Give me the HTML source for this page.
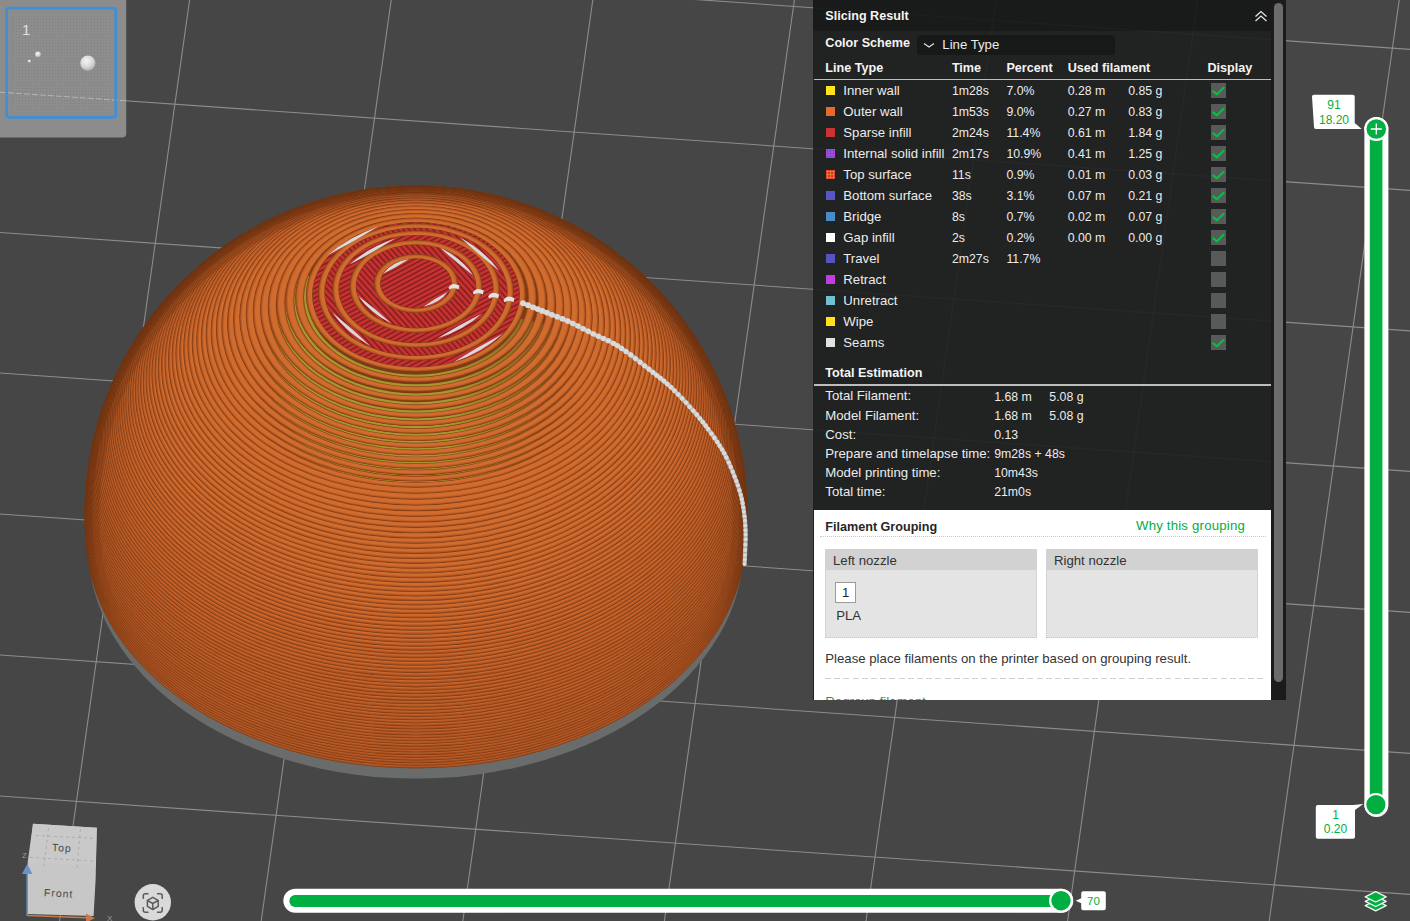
<!DOCTYPE html>
<html><head><meta charset="utf-8"><style>
html,body{margin:0;padding:0;width:1410px;height:921px;overflow:hidden;background:#454645;}
#vp{position:absolute;left:0;top:0;}

#pn{position:absolute;left:813px;top:0;width:458px;height:700px;overflow:hidden;font-family:"Liberation Sans",sans-serif;}
#pn span{position:absolute;white-space:nowrap;color:#ececec;}
#pn .t{font-size:13.2px;line-height:13.2px;}
#pn .n{font-size:12.3px;line-height:12.3px;}
#pn .b{font-size:12.6px;line-height:12.6px;font-weight:bold;color:#f4f4f4;}
#hd{position:absolute;left:0;top:0;width:458px;height:30.6px;background:rgba(22,23,23,0.93);}
#bd{position:absolute;left:0;top:30.6px;width:458px;height:479px;background:rgba(30,32,31,0.92);}
#wh{position:absolute;left:0;top:509.5px;width:458px;height:191px;background:#fff;box-sizing:border-box;border-left:1px solid #202020;border-bottom:1px solid #202020;}
#dd{position:absolute;left:104px;top:35.3px;width:198px;height:20px;background:#171818;border-radius:3px;}
.hl{position:absolute;left:1px;width:457px;height:1.3px;background:#bdbdbd;}
.sw{position:absolute;width:9px;height:9px;}
.cb{position:absolute;left:398px;width:15px;height:15px;background:#585959;}
.ck{position:absolute;left:398px;}
.dl{position:absolute;height:0;}
.nz{position:absolute;top:549.4px;width:212px;height:89px;background:#e4e4e4;box-sizing:border-box;border:1px dotted #c4c4c4;}
.nzh{position:absolute;left:-1px;top:-1px;width:212px;height:20.4px;background:#d2d2d2;}
#fb{position:absolute;left:21.9px;top:581.7px;width:19.5px;height:19.8px;background:#fff;border:1.1px solid #9a9a9a;font-size:13px;line-height:20px;text-align:center;color:#222;}
#sc{position:absolute;left:1271px;top:0;width:15px;height:700px;background:#1b1b1b;}
#th{position:absolute;left:3px;top:3px;width:9px;height:679px;background:#6b6b6b;border-radius:4.5px;}

</style></head><body>
<svg id="vp" width="1410" height="921" viewBox="0 0 1410 921">
<g stroke="#8b8c8b" stroke-width="1.1" fill="none"><line x1="0" y1="-49" x2="1410" y2="49.4"/><line x1="0" y1="92" x2="1410" y2="190.4"/><line x1="0" y1="232.5" x2="1410" y2="330.9"/><line x1="0" y1="373" x2="1410" y2="471.4"/><line x1="0" y1="514" x2="1410" y2="612.4"/><line x1="0" y1="655" x2="1410" y2="753.4"/><line x1="0" y1="796" x2="1410" y2="894.4"/><line x1="-12.0" y1="0" x2="-142.0" y2="921"/><line x1="189.6" y1="0" x2="59.6" y2="921"/><line x1="391.2" y1="0" x2="261.2" y2="921"/><line x1="592.8" y1="0" x2="462.8" y2="921"/><line x1="794.4" y1="0" x2="664.4" y2="921"/><line x1="996.0" y1="0" x2="866.0" y2="921"/><line x1="1197.6" y1="0" x2="1067.6" y2="921"/><line x1="1399.2" y1="0" x2="1269.2" y2="921"/></g>
<defs>
<pattern id="hatch1" patternUnits="userSpaceOnUse" width="4.2" height="4.2" patternTransform="rotate(-28)"><rect width="4.2" height="4.2" fill="#c63232"/><rect y="2.5" width="4.2" height="1.7" fill="#8e1f1f"/></pattern>
<pattern id="hatch0" patternUnits="userSpaceOnUse" width="4.4" height="4.4" patternTransform="rotate(48)"><rect width="4.4" height="4.4" fill="#c63232"/><rect y="2.6" width="4.4" height="1.8" fill="#8e1f1f"/></pattern>
</defs><ellipse cx="416.0" cy="547.75" rx="327.56" ry="230.83" fill="#6a6c6c"/>
<linearGradient id="yfade" gradientUnits="userSpaceOnUse" x1="450" y1="0" x2="600" y2="0"><stop offset="0" stop-color="#fff"/><stop offset="1" stop-color="#fff" stop-opacity="0"/></linearGradient>
<mask id="ymask"><path d="M0,262 L240,262 L600,335 L900,380 L900,900 L0,900Z" fill="url(#yfade)"/></mask>
<ellipse cx="416.0" cy="537.55" rx="329.76" ry="230.83" fill="#7e3c16"/>
<ellipse cx="416.0" cy="537.55" rx="329.26" ry="230.28" fill="#9a4a1d"/>
<ellipse cx="416.0" cy="537.55" rx="328.66" ry="229.53" fill="#b35726"/>
<ellipse cx="416.0" cy="537.55" rx="327.96" ry="228.63" fill="#c6632a"/>
<ellipse cx="416.0" cy="537.55" rx="327.16" ry="227.73" fill="#d06c2e"/>
<ellipse cx="416.0" cy="534.72" rx="330.15" ry="231.11" fill="#7e3c16"/>
<ellipse cx="416.0" cy="534.72" rx="329.65" ry="230.56" fill="#9a4a1d"/>
<ellipse cx="416.0" cy="534.72" rx="329.05" ry="229.81" fill="#b35726"/>
<ellipse cx="416.0" cy="534.72" rx="328.35" ry="228.91" fill="#c6632a"/>
<ellipse cx="416.0" cy="534.72" rx="327.55" ry="228.01" fill="#d06c2e"/>
<ellipse cx="416.0" cy="531.9" rx="330.49" ry="231.34" fill="#7e3c16"/>
<ellipse cx="416.0" cy="531.9" rx="329.99" ry="230.79" fill="#9a4a1d"/>
<ellipse cx="416.0" cy="531.9" rx="329.39" ry="230.04" fill="#b35726"/>
<ellipse cx="416.0" cy="531.9" rx="328.69" ry="229.14" fill="#c6632a"/>
<ellipse cx="416.0" cy="531.9" rx="327.89" ry="228.24" fill="#d06c2e"/>
<ellipse cx="416.0" cy="529.08" rx="330.78" ry="231.55" fill="#7e3c16"/>
<ellipse cx="416.0" cy="529.08" rx="330.28" ry="231" fill="#9a4a1d"/>
<ellipse cx="416.0" cy="529.08" rx="329.68" ry="230.25" fill="#b35726"/>
<ellipse cx="416.0" cy="529.08" rx="328.98" ry="229.35" fill="#c6632a"/>
<ellipse cx="416.0" cy="529.08" rx="328.18" ry="228.45" fill="#d06c2e"/>
<ellipse cx="416.0" cy="526.25" rx="331.02" ry="231.72" fill="#7e3c16"/>
<ellipse cx="416.0" cy="526.25" rx="330.52" ry="231.17" fill="#9a4a1d"/>
<ellipse cx="416.0" cy="526.25" rx="329.92" ry="230.42" fill="#b35726"/>
<ellipse cx="416.0" cy="526.25" rx="329.22" ry="229.52" fill="#c6632a"/>
<ellipse cx="416.0" cy="526.25" rx="328.42" ry="228.62" fill="#d06c2e"/>
<ellipse cx="416.0" cy="523.43" rx="331.21" ry="231.85" fill="#7e3c16"/>
<ellipse cx="416.0" cy="523.43" rx="330.71" ry="231.3" fill="#9a4a1d"/>
<ellipse cx="416.0" cy="523.43" rx="330.11" ry="230.55" fill="#b35726"/>
<ellipse cx="416.0" cy="523.43" rx="329.41" ry="229.65" fill="#c6632a"/>
<ellipse cx="416.0" cy="523.43" rx="328.61" ry="228.75" fill="#d06c2e"/>
<ellipse cx="416.0" cy="520.61" rx="331.36" ry="231.95" fill="#7e3c16"/>
<ellipse cx="416.0" cy="520.61" rx="330.86" ry="231.4" fill="#9a4a1d"/>
<ellipse cx="416.0" cy="520.61" rx="330.26" ry="230.65" fill="#b35726"/>
<ellipse cx="416.0" cy="520.61" rx="329.56" ry="229.75" fill="#c6632a"/>
<ellipse cx="416.0" cy="520.61" rx="328.76" ry="228.85" fill="#d06c2e"/>
<ellipse cx="416.0" cy="517.79" rx="331.45" ry="232.02" fill="#7e3c16"/>
<ellipse cx="416.0" cy="517.79" rx="330.95" ry="231.47" fill="#9a4a1d"/>
<ellipse cx="416.0" cy="517.79" rx="330.35" ry="230.72" fill="#b35726"/>
<ellipse cx="416.0" cy="517.79" rx="329.65" ry="229.82" fill="#c6632a"/>
<ellipse cx="416.0" cy="517.79" rx="328.85" ry="228.92" fill="#d06c2e"/>
<ellipse cx="416.0" cy="514.96" rx="331.5" ry="232.05" fill="#7e3c16"/>
<ellipse cx="416.0" cy="514.96" rx="331" ry="231.5" fill="#9a4a1d"/>
<ellipse cx="416.0" cy="514.96" rx="330.4" ry="230.75" fill="#b35726"/>
<ellipse cx="416.0" cy="514.96" rx="329.7" ry="229.85" fill="#c6632a"/>
<ellipse cx="416.0" cy="514.96" rx="328.9" ry="228.95" fill="#d06c2e"/>
<ellipse cx="416.0" cy="512.14" rx="331.49" ry="232.04" fill="#7e3c16"/>
<ellipse cx="416.0" cy="512.14" rx="330.99" ry="231.49" fill="#9a4a1d"/>
<ellipse cx="416.0" cy="512.14" rx="330.39" ry="230.74" fill="#b35726"/>
<ellipse cx="416.0" cy="512.14" rx="329.69" ry="229.84" fill="#c6632a"/>
<ellipse cx="416.0" cy="512.14" rx="328.89" ry="228.94" fill="#d06c2e"/>
<ellipse cx="416.0" cy="509.32" rx="331.44" ry="232.01" fill="#7e3c16"/>
<ellipse cx="416.0" cy="509.32" rx="330.94" ry="231.46" fill="#9a4a1d"/>
<ellipse cx="416.0" cy="509.32" rx="330.34" ry="230.71" fill="#b35726"/>
<ellipse cx="416.0" cy="509.32" rx="329.64" ry="229.81" fill="#c6632a"/>
<ellipse cx="416.0" cy="509.32" rx="328.84" ry="228.91" fill="#d06c2e"/>
<ellipse cx="416.0" cy="506.49" rx="331.34" ry="231.94" fill="#7e3c16"/>
<ellipse cx="416.0" cy="506.49" rx="330.84" ry="231.39" fill="#9a4a1d"/>
<ellipse cx="416.0" cy="506.49" rx="330.24" ry="230.64" fill="#b35726"/>
<ellipse cx="416.0" cy="506.49" rx="329.54" ry="229.74" fill="#c6632a"/>
<ellipse cx="416.0" cy="506.49" rx="328.74" ry="228.84" fill="#d06c2e"/>
<ellipse cx="416.0" cy="503.67" rx="331.18" ry="231.83" fill="#7e3c16"/>
<ellipse cx="416.0" cy="503.67" rx="330.68" ry="231.28" fill="#9a4a1d"/>
<ellipse cx="416.0" cy="503.67" rx="330.08" ry="230.53" fill="#b35726"/>
<ellipse cx="416.0" cy="503.67" rx="329.38" ry="229.63" fill="#c6632a"/>
<ellipse cx="416.0" cy="503.67" rx="328.58" ry="228.73" fill="#d06c2e"/>
<ellipse cx="416.0" cy="500.85" rx="330.98" ry="231.69" fill="#7e3c16"/>
<ellipse cx="416.0" cy="500.85" rx="330.48" ry="231.14" fill="#9a4a1d"/>
<ellipse cx="416.0" cy="500.85" rx="329.88" ry="230.39" fill="#b35726"/>
<ellipse cx="416.0" cy="500.85" rx="329.18" ry="229.49" fill="#c6632a"/>
<ellipse cx="416.0" cy="500.85" rx="328.38" ry="228.59" fill="#d06c2e"/>
<ellipse cx="416.0" cy="498.02" rx="330.73" ry="231.51" fill="#7e3c16"/>
<ellipse cx="416.0" cy="498.02" rx="330.23" ry="230.96" fill="#9a4a1d"/>
<ellipse cx="416.0" cy="498.02" rx="329.63" ry="230.21" fill="#b35726"/>
<ellipse cx="416.0" cy="498.02" rx="328.93" ry="229.31" fill="#c6632a"/>
<ellipse cx="416.0" cy="498.02" rx="328.13" ry="228.41" fill="#d06c2e"/>
<ellipse cx="416.0" cy="495.2" rx="330.44" ry="231.3" fill="#7e3c16"/>
<ellipse cx="416.0" cy="495.2" rx="329.94" ry="230.75" fill="#9a4a1d"/>
<ellipse cx="416.0" cy="495.2" rx="329.34" ry="230" fill="#b35726"/>
<ellipse cx="416.0" cy="495.2" rx="328.64" ry="229.1" fill="#c6632a"/>
<ellipse cx="416.0" cy="495.2" rx="327.84" ry="228.2" fill="#d06c2e"/>
<ellipse cx="416.0" cy="492.38" rx="330.09" ry="231.06" fill="#7e3c16"/>
<ellipse cx="416.0" cy="492.38" rx="329.59" ry="230.51" fill="#9a4a1d"/>
<ellipse cx="416.0" cy="492.38" rx="328.99" ry="229.76" fill="#b35726"/>
<ellipse cx="416.0" cy="492.38" rx="328.29" ry="228.86" fill="#c6632a"/>
<ellipse cx="416.0" cy="492.38" rx="327.49" ry="227.96" fill="#d06c2e"/>
<ellipse cx="416.0" cy="489.56" rx="329.69" ry="230.78" fill="#7e3c16"/>
<ellipse cx="416.0" cy="489.56" rx="329.19" ry="230.23" fill="#9a4a1d"/>
<ellipse cx="416.0" cy="489.56" rx="328.59" ry="229.48" fill="#b35726"/>
<ellipse cx="416.0" cy="489.56" rx="327.89" ry="228.58" fill="#c6632a"/>
<ellipse cx="416.0" cy="489.56" rx="327.09" ry="227.68" fill="#d06c2e"/>
<ellipse cx="416.0" cy="486.73" rx="329.24" ry="230.47" fill="#7e3c16"/>
<ellipse cx="416.0" cy="486.73" rx="328.74" ry="229.92" fill="#9a4a1d"/>
<ellipse cx="416.0" cy="486.73" rx="328.14" ry="229.17" fill="#b35726"/>
<ellipse cx="416.0" cy="486.73" rx="327.44" ry="228.27" fill="#c6632a"/>
<ellipse cx="416.0" cy="486.73" rx="326.64" ry="227.37" fill="#d06c2e"/>
<ellipse cx="416.0" cy="483.91" rx="328.74" ry="230.12" fill="#7e3c16"/>
<ellipse cx="416.0" cy="483.91" rx="328.24" ry="229.57" fill="#9a4a1d"/>
<ellipse cx="416.0" cy="483.91" rx="327.64" ry="228.82" fill="#b35726"/>
<ellipse cx="416.0" cy="483.91" rx="326.94" ry="227.92" fill="#c6632a"/>
<ellipse cx="416.0" cy="483.91" rx="326.14" ry="227.02" fill="#d06c2e"/>
<ellipse cx="416.0" cy="481.09" rx="328.19" ry="229.74" fill="#7e3c16"/>
<ellipse cx="416.0" cy="481.09" rx="327.69" ry="229.19" fill="#9a4a1d"/>
<ellipse cx="416.0" cy="481.09" rx="327.09" ry="228.44" fill="#b35726"/>
<ellipse cx="416.0" cy="481.09" rx="326.39" ry="227.54" fill="#c6632a"/>
<ellipse cx="416.0" cy="481.09" rx="325.59" ry="226.64" fill="#d06c2e"/>
<ellipse cx="416.0" cy="478.26" rx="327.6" ry="229.32" fill="#7e3c16"/>
<ellipse cx="416.0" cy="478.26" rx="327.1" ry="228.77" fill="#9a4a1d"/>
<ellipse cx="416.0" cy="478.26" rx="326.5" ry="228.02" fill="#b35726"/>
<ellipse cx="416.0" cy="478.26" rx="325.8" ry="227.12" fill="#c6632a"/>
<ellipse cx="416.0" cy="478.26" rx="325" ry="226.22" fill="#d06c2e"/>
<ellipse cx="416.0" cy="475.44" rx="326.95" ry="228.86" fill="#7e3c16"/>
<ellipse cx="416.0" cy="475.44" rx="326.45" ry="228.31" fill="#9a4a1d"/>
<ellipse cx="416.0" cy="475.44" rx="325.85" ry="227.56" fill="#b35726"/>
<ellipse cx="416.0" cy="475.44" rx="325.15" ry="226.66" fill="#c6632a"/>
<ellipse cx="416.0" cy="475.44" rx="324.35" ry="225.76" fill="#d06c2e"/>
<ellipse cx="416.0" cy="472.62" rx="326.25" ry="228.37" fill="#7e3c16"/>
<ellipse cx="416.0" cy="472.62" rx="325.75" ry="227.82" fill="#9a4a1d"/>
<ellipse cx="416.0" cy="472.62" rx="325.15" ry="227.07" fill="#b35726"/>
<ellipse cx="416.0" cy="472.62" rx="324.45" ry="226.17" fill="#c6632a"/>
<ellipse cx="416.0" cy="472.62" rx="323.65" ry="225.27" fill="#d06c2e"/>
<ellipse cx="416.0" cy="469.79" rx="325.49" ry="227.85" fill="#7e3c16"/>
<ellipse cx="416.0" cy="469.79" rx="324.99" ry="227.3" fill="#9a4a1d"/>
<ellipse cx="416.0" cy="469.79" rx="324.39" ry="226.55" fill="#b35726"/>
<ellipse cx="416.0" cy="469.79" rx="323.69" ry="225.65" fill="#c6632a"/>
<ellipse cx="416.0" cy="469.79" rx="322.89" ry="224.75" fill="#d06c2e"/>
<ellipse cx="416.0" cy="466.97" rx="324.69" ry="227.28" fill="#7e3c16"/>
<ellipse cx="416.0" cy="466.97" rx="324.19" ry="226.73" fill="#9a4a1d"/>
<ellipse cx="416.0" cy="466.97" rx="323.59" ry="225.98" fill="#b35726"/>
<ellipse cx="416.0" cy="466.97" rx="322.89" ry="225.08" fill="#c6632a"/>
<ellipse cx="416.0" cy="466.97" rx="322.09" ry="224.18" fill="#d06c2e"/>
<ellipse cx="416.0" cy="464.15" rx="323.83" ry="226.68" fill="#7e3c16"/>
<ellipse cx="416.0" cy="464.15" rx="323.33" ry="226.13" fill="#9a4a1d"/>
<ellipse cx="416.0" cy="464.15" rx="322.73" ry="225.38" fill="#b35726"/>
<ellipse cx="416.0" cy="464.15" rx="322.03" ry="224.48" fill="#c6632a"/>
<ellipse cx="416.0" cy="464.15" rx="321.23" ry="223.58" fill="#d06c2e"/>
<ellipse cx="416.0" cy="461.33" rx="322.93" ry="226.05" fill="#7e3c16"/>
<ellipse cx="416.0" cy="461.33" rx="322.43" ry="225.5" fill="#9a4a1d"/>
<ellipse cx="416.0" cy="461.33" rx="321.83" ry="224.75" fill="#b35726"/>
<ellipse cx="416.0" cy="461.33" rx="321.13" ry="223.85" fill="#c6632a"/>
<ellipse cx="416.0" cy="461.33" rx="320.33" ry="222.95" fill="#d06c2e"/>
<ellipse cx="416.0" cy="458.5" rx="321.96" ry="225.37" fill="#7e3c16"/>
<ellipse cx="416.0" cy="458.5" rx="321.46" ry="224.82" fill="#9a4a1d"/>
<ellipse cx="416.0" cy="458.5" rx="320.86" ry="224.07" fill="#b35726"/>
<ellipse cx="416.0" cy="458.5" rx="320.16" ry="223.17" fill="#c6632a"/>
<ellipse cx="416.0" cy="458.5" rx="319.36" ry="222.27" fill="#d06c2e"/>
<ellipse cx="416.0" cy="455.68" rx="320.95" ry="224.66" fill="#7e3c16"/>
<ellipse cx="416.0" cy="455.68" rx="320.45" ry="224.11" fill="#9a4a1d"/>
<ellipse cx="416.0" cy="455.68" rx="319.85" ry="223.36" fill="#b35726"/>
<ellipse cx="416.0" cy="455.68" rx="319.15" ry="222.46" fill="#c6632a"/>
<ellipse cx="416.0" cy="455.68" rx="318.35" ry="221.56" fill="#d06c2e"/>
<ellipse cx="416.0" cy="452.86" rx="319.88" ry="223.92" fill="#7e3c16"/>
<ellipse cx="416.0" cy="452.86" rx="319.38" ry="223.37" fill="#9a4a1d"/>
<ellipse cx="416.0" cy="452.86" rx="318.78" ry="222.62" fill="#b35726"/>
<ellipse cx="416.0" cy="452.86" rx="318.08" ry="221.72" fill="#c6632a"/>
<ellipse cx="416.0" cy="452.86" rx="317.28" ry="220.82" fill="#d06c2e"/>
<ellipse cx="416.0" cy="450.03" rx="318.76" ry="223.13" fill="#7e3c16"/>
<ellipse cx="416.0" cy="450.03" rx="318.26" ry="222.58" fill="#9a4a1d"/>
<ellipse cx="416.0" cy="450.03" rx="317.66" ry="221.83" fill="#b35726"/>
<ellipse cx="416.0" cy="450.03" rx="316.96" ry="220.93" fill="#c6632a"/>
<ellipse cx="416.0" cy="450.03" rx="316.16" ry="220.03" fill="#d06c2e"/>
<ellipse cx="416.0" cy="447.21" rx="317.58" ry="222.3" fill="#7e3c16"/>
<ellipse cx="416.0" cy="447.21" rx="317.08" ry="221.75" fill="#9a4a1d"/>
<ellipse cx="416.0" cy="447.21" rx="316.48" ry="221" fill="#b35726"/>
<ellipse cx="416.0" cy="447.21" rx="315.78" ry="220.1" fill="#c6632a"/>
<ellipse cx="416.0" cy="447.21" rx="314.98" ry="219.2" fill="#d06c2e"/>
<ellipse cx="416.0" cy="444.39" rx="316.34" ry="221.44" fill="#7e3c16"/>
<ellipse cx="416.0" cy="444.39" rx="315.84" ry="220.89" fill="#9a4a1d"/>
<ellipse cx="416.0" cy="444.39" rx="315.24" ry="220.14" fill="#b35726"/>
<ellipse cx="416.0" cy="444.39" rx="314.54" ry="219.24" fill="#c6632a"/>
<ellipse cx="416.0" cy="444.39" rx="313.74" ry="218.34" fill="#d06c2e"/>
<ellipse cx="416.0" cy="441.56" rx="315.05" ry="220.54" fill="#7e3c16"/>
<ellipse cx="416.0" cy="441.56" rx="314.55" ry="219.99" fill="#9a4a1d"/>
<ellipse cx="416.0" cy="441.56" rx="313.95" ry="219.25" fill="#b35726"/>
<ellipse cx="416.0" cy="441.56" rx="313.25" ry="218.35" fill="#c6632a"/>
<ellipse cx="416.0" cy="441.56" rx="312.45" ry="217.46" fill="#d06c2e"/>
<ellipse cx="416.0" cy="438.74" rx="313.71" ry="219.59" fill="#7e3c16"/>
<ellipse cx="416.0" cy="438.74" rx="313.21" ry="219.05" fill="#9a4a1d"/>
<ellipse cx="416.0" cy="438.74" rx="312.61" ry="218.31" fill="#b35726"/>
<ellipse cx="416.0" cy="438.74" rx="311.91" ry="217.43" fill="#c6632a"/>
<ellipse cx="416.0" cy="438.74" rx="311.11" ry="216.54" fill="#d06c2e"/>
<ellipse cx="416.0" cy="435.92" rx="312.3" ry="218.61" fill="#7e3c16"/>
<ellipse cx="416.0" cy="435.92" rx="311.8" ry="218.07" fill="#9a4a1d"/>
<ellipse cx="416.0" cy="435.92" rx="311.2" ry="217.34" fill="#b35726"/>
<ellipse cx="416.0" cy="435.92" rx="310.5" ry="216.46" fill="#c6632a"/>
<ellipse cx="416.0" cy="435.92" rx="309.7" ry="215.59" fill="#d06c2e"/>
<ellipse cx="416.0" cy="433.1" rx="310.84" ry="217.59" fill="#7e3c16"/>
<ellipse cx="416.0" cy="433.1" rx="310.34" ry="217.05" fill="#9a4a1d"/>
<ellipse cx="416.0" cy="433.1" rx="309.74" ry="216.33" fill="#b35726"/>
<ellipse cx="416.0" cy="433.1" rx="309.04" ry="215.46" fill="#c6632a"/>
<ellipse cx="416.0" cy="433.1" rx="308.24" ry="214.59" fill="#d06c2e"/>
<ellipse cx="416.0" cy="430.27" rx="309.31" ry="216.52" fill="#7e3c16"/>
<ellipse cx="416.0" cy="430.27" rx="308.81" ry="215.99" fill="#9a4a1d"/>
<ellipse cx="416.0" cy="430.27" rx="308.21" ry="215.27" fill="#b35726"/>
<ellipse cx="416.0" cy="430.27" rx="307.51" ry="214.41" fill="#c6632a"/>
<ellipse cx="416.0" cy="430.27" rx="306.71" ry="213.55" fill="#d06c2e"/>
<ellipse cx="416.0" cy="427.45" rx="307.73" ry="215.41" fill="#7e3c16"/>
<ellipse cx="416.0" cy="427.45" rx="307.23" ry="214.89" fill="#9a4a1d"/>
<ellipse cx="416.0" cy="427.45" rx="306.63" ry="214.18" fill="#b35726"/>
<ellipse cx="416.0" cy="427.45" rx="305.93" ry="213.32" fill="#c6632a"/>
<ellipse cx="416.0" cy="427.45" rx="305.13" ry="212.47" fill="#d06c2e"/>
<ellipse cx="416.0" cy="424.63" rx="306.08" ry="214.26" fill="#7e3c16"/>
<ellipse cx="416.0" cy="424.63" rx="305.58" ry="213.74" fill="#9a4a1d"/>
<ellipse cx="416.0" cy="424.63" rx="304.98" ry="213.04" fill="#b35726"/>
<ellipse cx="416.0" cy="424.63" rx="304.28" ry="212.19" fill="#c6632a"/>
<ellipse cx="416.0" cy="424.63" rx="303.48" ry="211.34" fill="#d06c2e"/>
<ellipse cx="416.0" cy="421.8" rx="304.38" ry="213.06" fill="#7e3c16"/>
<ellipse cx="416.0" cy="421.8" rx="303.88" ry="212.55" fill="#9a4a1d"/>
<ellipse cx="416.0" cy="421.8" rx="303.28" ry="211.85" fill="#b35726"/>
<ellipse cx="416.0" cy="421.8" rx="302.58" ry="211.01" fill="#c6632a"/>
<ellipse cx="416.0" cy="421.8" rx="301.78" ry="210.18" fill="#d06c2e"/>
<ellipse cx="416.0" cy="418.98" rx="302.61" ry="211.82" fill="#7e3c16"/>
<ellipse cx="416.0" cy="418.98" rx="302.11" ry="211.32" fill="#9a4a1d"/>
<ellipse cx="416.0" cy="418.98" rx="301.51" ry="210.62" fill="#b35726"/>
<ellipse cx="416.0" cy="418.98" rx="300.81" ry="209.79" fill="#c6632a"/>
<ellipse cx="416.0" cy="418.98" rx="300.01" ry="208.96" fill="#d06c2e"/>
<ellipse cx="416.0" cy="416.16" rx="300.77" ry="210.54" fill="#7e3c16"/>
<ellipse cx="416.0" cy="416.16" rx="300.27" ry="210.04" fill="#9a4a1d"/>
<ellipse cx="416.0" cy="416.16" rx="299.67" ry="209.35" fill="#b35726"/>
<ellipse cx="416.0" cy="416.16" rx="298.97" ry="208.53" fill="#c6632a"/>
<ellipse cx="416.0" cy="416.16" rx="298.17" ry="207.71" fill="#d06c2e"/>
<ellipse cx="416.0" cy="413.33" rx="298.87" ry="209.21" fill="#7e3c16"/>
<ellipse cx="416.0" cy="413.33" rx="298.37" ry="208.71" fill="#9a4a1d"/>
<ellipse cx="416.0" cy="413.33" rx="297.77" ry="208.03" fill="#b35726"/>
<ellipse cx="416.0" cy="413.33" rx="297.07" ry="207.22" fill="#c6632a"/>
<ellipse cx="416.0" cy="413.33" rx="296.27" ry="206.4" fill="#d06c2e"/>
<ellipse cx="416.0" cy="410.51" rx="296.9" ry="207.83" fill="#7e3c16"/>
<ellipse cx="416.0" cy="410.51" rx="296.4" ry="207.34" fill="#9a4a1d"/>
<ellipse cx="416.0" cy="410.51" rx="295.8" ry="206.67" fill="#b35726"/>
<ellipse cx="416.0" cy="410.51" rx="295.1" ry="205.86" fill="#c6632a"/>
<ellipse cx="416.0" cy="410.51" rx="294.3" ry="205.05" fill="#d06c2e"/>
<ellipse cx="416.0" cy="407.69" rx="294.87" ry="206.41" fill="#7e3c16"/>
<ellipse cx="416.0" cy="407.69" rx="294.37" ry="205.92" fill="#9a4a1d"/>
<ellipse cx="416.0" cy="407.69" rx="293.77" ry="205.25" fill="#b35726"/>
<ellipse cx="416.0" cy="407.69" rx="293.07" ry="204.45" fill="#c6632a"/>
<ellipse cx="416.0" cy="407.69" rx="292.27" ry="203.66" fill="#d06c2e"/>
<ellipse cx="416.0" cy="404.87" rx="292.76" ry="204.93" fill="#7e3c16"/>
<ellipse cx="416.0" cy="404.87" rx="292.26" ry="204.45" fill="#9a4a1d"/>
<ellipse cx="416.0" cy="404.87" rx="291.66" ry="203.79" fill="#b35726"/>
<ellipse cx="416.0" cy="404.87" rx="290.96" ry="203" fill="#c6632a"/>
<ellipse cx="416.0" cy="404.87" rx="290.16" ry="202.21" fill="#d06c2e"/>
<ellipse cx="416.0" cy="402.04" rx="290.58" ry="203.41" fill="#7e3c16"/>
<ellipse cx="416.0" cy="402.04" rx="290.08" ry="202.93" fill="#9a4a1d"/>
<ellipse cx="416.0" cy="402.04" rx="289.48" ry="202.28" fill="#b35726"/>
<ellipse cx="416.0" cy="402.04" rx="288.78" ry="201.5" fill="#c6632a"/>
<ellipse cx="416.0" cy="402.04" rx="287.98" ry="200.71" fill="#d06c2e"/>
<ellipse cx="416.0" cy="399.22" rx="288.34" ry="201.83" fill="#7e3c16"/>
<ellipse cx="416.0" cy="399.22" rx="287.84" ry="201.36" fill="#9a4a1d"/>
<ellipse cx="416.0" cy="399.22" rx="287.24" ry="200.72" fill="#b35726"/>
<ellipse cx="416.0" cy="399.22" rx="286.54" ry="199.94" fill="#c6632a"/>
<ellipse cx="416.0" cy="399.22" rx="285.74" ry="199.17" fill="#d06c2e"/>
<ellipse cx="416.0" cy="396.4" rx="286.01" ry="200.21" fill="#7e3c16"/>
<ellipse cx="416.0" cy="396.4" rx="285.51" ry="199.74" fill="#9a4a1d"/>
<ellipse cx="416.0" cy="396.4" rx="284.91" ry="199.1" fill="#b35726"/>
<ellipse cx="416.0" cy="396.4" rx="284.21" ry="198.33" fill="#c6632a"/>
<ellipse cx="416.0" cy="396.4" rx="283.41" ry="197.57" fill="#d06c2e"/>
<ellipse cx="416.0" cy="393.57" rx="283.61" ry="198.53" fill="#7e3c16"/>
<ellipse cx="416.0" cy="393.57" rx="283.11" ry="198.06" fill="#9a4a1d"/>
<ellipse cx="416.0" cy="393.57" rx="282.51" ry="197.43" fill="#b35726"/>
<ellipse cx="416.0" cy="393.57" rx="281.81" ry="196.67" fill="#c6632a"/>
<ellipse cx="416.0" cy="393.57" rx="281.01" ry="195.91" fill="#d06c2e"/>
<ellipse cx="416.0" cy="390.75" rx="281.13" ry="196.79" fill="#7e3c16"/>
<ellipse cx="416.0" cy="390.75" rx="280.63" ry="196.33" fill="#9a4a1d"/>
<ellipse cx="416.0" cy="390.75" rx="280.03" ry="195.71" fill="#b35726"/>
<ellipse cx="416.0" cy="390.75" rx="279.33" ry="194.96" fill="#c6632a"/>
<ellipse cx="416.0" cy="390.75" rx="278.53" ry="194.21" fill="#d06c2e"/>
<ellipse cx="416.0" cy="387.93" rx="278.57" ry="195" fill="#7e3c16"/>
<ellipse cx="416.0" cy="387.93" rx="278.07" ry="194.55" fill="#9a4a1d"/>
<ellipse cx="416.0" cy="387.93" rx="277.47" ry="193.93" fill="#b35726"/>
<ellipse cx="416.0" cy="387.93" rx="276.77" ry="193.19" fill="#c6632a"/>
<ellipse cx="416.0" cy="387.93" rx="275.97" ry="192.44" fill="#d06c2e"/>
<ellipse cx="416.0" cy="385.1" rx="275.93" ry="193.15" fill="#7e3c16"/>
<ellipse cx="416.0" cy="385.1" rx="275.43" ry="192.7" fill="#9a4a1d"/>
<ellipse cx="416.0" cy="385.1" rx="274.83" ry="192.09" fill="#b35726"/>
<ellipse cx="416.0" cy="385.1" rx="274.13" ry="191.36" fill="#c6632a"/>
<ellipse cx="416.0" cy="385.1" rx="273.33" ry="190.62" fill="#d06c2e"/>
<ellipse cx="416.0" cy="382.28" rx="273.21" ry="191.25" fill="#7e3c16"/>
<ellipse cx="416.0" cy="382.28" rx="272.71" ry="190.8" fill="#9a4a1d"/>
<ellipse cx="416.0" cy="382.28" rx="272.11" ry="190.19" fill="#b35726"/>
<ellipse cx="416.0" cy="382.28" rx="271.41" ry="189.47" fill="#c6632a"/>
<ellipse cx="416.0" cy="382.28" rx="270.61" ry="188.74" fill="#d06c2e"/>
<ellipse cx="416.0" cy="379.46" rx="270.39" ry="189.28" fill="#7e3c16"/>
<ellipse cx="416.0" cy="379.46" rx="269.89" ry="188.84" fill="#9a4a1d"/>
<ellipse cx="416.0" cy="379.46" rx="269.29" ry="188.24" fill="#b35726"/>
<ellipse cx="416.0" cy="379.46" rx="268.59" ry="187.52" fill="#c6632a"/>
<ellipse cx="416.0" cy="379.46" rx="267.79" ry="186.8" fill="#d06c2e"/>
<ellipse cx="416.0" cy="376.64" rx="267.49" ry="187.24" fill="#7e3c16"/>
<ellipse cx="416.0" cy="376.64" rx="266.99" ry="186.81" fill="#9a4a1d"/>
<ellipse cx="416.0" cy="376.64" rx="266.39" ry="186.22" fill="#b35726"/>
<ellipse cx="416.0" cy="376.64" rx="265.69" ry="185.5" fill="#c6632a"/>
<ellipse cx="416.0" cy="376.64" rx="264.89" ry="184.79" fill="#d06c2e"/>
<ellipse cx="416.0" cy="373.81" rx="264.49" ry="185.14" fill="#7e3c16"/>
<ellipse cx="416.0" cy="373.81" rx="263.99" ry="184.71" fill="#9a4a1d"/>
<ellipse cx="416.0" cy="373.81" rx="263.39" ry="184.13" fill="#b35726"/>
<ellipse cx="416.0" cy="373.81" rx="262.69" ry="183.43" fill="#c6632a"/>
<ellipse cx="416.0" cy="373.81" rx="261.89" ry="182.72" fill="#d06c2e"/>
<ellipse cx="416.0" cy="370.99" rx="261.4" ry="182.98" fill="#7e3c16"/>
<ellipse cx="416.0" cy="370.99" rx="260.9" ry="182.55" fill="#9a4a1d"/>
<ellipse cx="416.0" cy="370.99" rx="260.3" ry="181.97" fill="#b35726"/>
<ellipse cx="416.0" cy="370.99" rx="259.6" ry="181.28" fill="#c6632a"/>
<ellipse cx="416.0" cy="370.99" rx="258.8" ry="180.58" fill="#d06c2e"/>
<ellipse cx="416.0" cy="368.17" rx="258.21" ry="180.74" fill="#7e3c16"/>
<ellipse cx="416.0" cy="368.17" rx="257.71" ry="180.32" fill="#9a4a1d"/>
<ellipse cx="416.0" cy="368.17" rx="257.11" ry="179.75" fill="#b35726"/>
<ellipse cx="416.0" cy="368.17" rx="256.41" ry="179.06" fill="#c6632a"/>
<ellipse cx="416.0" cy="368.17" rx="255.61" ry="178.38" fill="#d06c2e"/>
<ellipse cx="416.0" cy="365.34" rx="254.91" ry="178.44" fill="#7e3c16"/>
<ellipse cx="416.0" cy="365.34" rx="254.41" ry="178.02" fill="#9a4a1d"/>
<ellipse cx="416.0" cy="365.34" rx="253.81" ry="177.45" fill="#b35726"/>
<ellipse cx="416.0" cy="365.34" rx="253.11" ry="176.77" fill="#c6632a"/>
<ellipse cx="416.0" cy="365.34" rx="252.31" ry="176.09" fill="#d06c2e"/>
<ellipse cx="416.0" cy="362.52" rx="251.5" ry="176.05" fill="#7e3c16"/>
<ellipse cx="416.0" cy="362.52" rx="251" ry="175.64" fill="#9a4a1d"/>
<ellipse cx="416.0" cy="362.52" rx="250.4" ry="175.08" fill="#b35726"/>
<ellipse cx="416.0" cy="362.52" rx="249.7" ry="174.41" fill="#c6632a"/>
<ellipse cx="416.0" cy="362.52" rx="248.9" ry="173.74" fill="#d06c2e"/>
<ellipse cx="416.0" cy="359.7" rx="247.99" ry="173.59" fill="#7e3c16"/>
<ellipse cx="416.0" cy="359.7" rx="247.49" ry="173.18" fill="#9a4a1d"/>
<ellipse cx="416.0" cy="359.7" rx="246.89" ry="172.63" fill="#b35726"/>
<ellipse cx="416.0" cy="359.7" rx="246.19" ry="171.97" fill="#c6632a"/>
<ellipse cx="416.0" cy="359.7" rx="245.39" ry="171.3" fill="#d06c2e"/>
<ellipse cx="416.0" cy="356.87" rx="244.35" ry="171.05" fill="#7e3c16"/>
<ellipse cx="416.0" cy="356.87" rx="243.85" ry="170.64" fill="#9a4a1d"/>
<ellipse cx="416.0" cy="356.87" rx="243.25" ry="170.1" fill="#b35726"/>
<ellipse cx="416.0" cy="356.87" rx="242.55" ry="169.44" fill="#c6632a"/>
<ellipse cx="416.0" cy="356.87" rx="241.75" ry="168.79" fill="#d06c2e"/>
<ellipse cx="416.0" cy="354.05" rx="240.59" ry="168.42" fill="#7e3c16"/>
<ellipse cx="416.0" cy="354.05" rx="240.09" ry="168.02" fill="#9a4a1d"/>
<ellipse cx="416.0" cy="354.05" rx="239.49" ry="167.48" fill="#b35726"/>
<ellipse cx="416.0" cy="354.05" rx="238.79" ry="166.83" fill="#c6632a"/>
<ellipse cx="416.0" cy="354.05" rx="237.99" ry="166.18" fill="#d06c2e"/>
<ellipse cx="416.0" cy="351.23" rx="236.71" ry="165.7" fill="#7e3c16"/>
<ellipse cx="416.0" cy="351.23" rx="236.21" ry="165.31" fill="#9a4a1d"/>
<ellipse cx="416.0" cy="351.23" rx="235.61" ry="164.77" fill="#b35726"/>
<ellipse cx="416.0" cy="351.23" rx="234.91" ry="164.13" fill="#c6632a"/>
<ellipse cx="416.0" cy="351.23" rx="234.11" ry="163.49" fill="#d06c2e"/>
<ellipse cx="416.0" cy="348.4" rx="232.69" ry="162.88" fill="#7e3c16"/>
<ellipse cx="416.0" cy="348.4" rx="232.19" ry="162.5" fill="#9a4a1d"/>
<ellipse cx="416.0" cy="348.4" rx="231.59" ry="161.97" fill="#b35726"/>
<ellipse cx="416.0" cy="348.4" rx="230.89" ry="161.34" fill="#c6632a"/>
<ellipse cx="416.0" cy="348.4" rx="230.09" ry="160.71" fill="#d06c2e"/>
<ellipse cx="416.0" cy="345.58" rx="228.53" ry="159.97" fill="#7e3c16"/>
<ellipse cx="416.0" cy="345.58" rx="228.03" ry="159.59" fill="#9a4a1d"/>
<ellipse cx="416.0" cy="345.58" rx="227.43" ry="159.07" fill="#b35726"/>
<ellipse cx="416.0" cy="345.58" rx="226.73" ry="158.44" fill="#c6632a"/>
<ellipse cx="416.0" cy="345.58" rx="225.93" ry="157.82" fill="#d06c2e"/>
<ellipse cx="416.0" cy="342.76" rx="224.22" ry="156.95" fill="#7e3c16"/>
<ellipse cx="416.0" cy="342.76" rx="223.72" ry="156.58" fill="#9a4a1d"/>
<ellipse cx="416.0" cy="342.76" rx="223.12" ry="156.06" fill="#b35726"/>
<ellipse cx="416.0" cy="342.76" rx="222.42" ry="155.45" fill="#c6632a"/>
<ellipse cx="416.0" cy="342.76" rx="221.62" ry="154.83" fill="#d06c2e"/>
<ellipse cx="416.0" cy="339.94" rx="219.75" ry="153.82" fill="#7e3c16"/>
<ellipse cx="416.0" cy="339.94" rx="219.25" ry="153.45" fill="#9a4a1d"/>
<ellipse cx="416.0" cy="339.94" rx="218.65" ry="152.94" fill="#b35726"/>
<ellipse cx="416.0" cy="339.94" rx="217.95" ry="152.34" fill="#c6632a"/>
<ellipse cx="416.0" cy="339.94" rx="217.15" ry="151.73" fill="#d06c2e"/>
<ellipse cx="416.0" cy="337.11" rx="215.11" ry="150.58" fill="#7e3c16"/>
<ellipse cx="416.0" cy="337.11" rx="214.61" ry="150.21" fill="#9a4a1d"/>
<ellipse cx="416.0" cy="337.11" rx="214.01" ry="149.71" fill="#b35726"/>
<ellipse cx="416.0" cy="337.11" rx="213.31" ry="149.11" fill="#c6632a"/>
<ellipse cx="416.0" cy="337.11" rx="212.51" ry="148.51" fill="#d06c2e"/>
<ellipse cx="416.0" cy="337.11" rx="207.51" ry="145.98" fill="#b55824"/>
<ellipse cx="416.0" cy="337.11" rx="206.71" ry="145.58" fill="#7e3c16"/>
<ellipse cx="416.0" cy="337.11" rx="206.11" ry="145.18" fill="#a29a30" mask="url(#ymask)"/>
<ellipse cx="416.0" cy="337.11" rx="203.11" ry="142.98" fill="#7e3c16"/>
<ellipse cx="416.0" cy="334.29" rx="210.29" ry="147.2" fill="#7e3c16"/>
<ellipse cx="416.0" cy="334.29" rx="209.79" ry="146.84" fill="#9a4a1d"/>
<ellipse cx="416.0" cy="334.29" rx="209.19" ry="146.35" fill="#b35726"/>
<ellipse cx="416.0" cy="334.29" rx="208.49" ry="145.76" fill="#c6632a"/>
<ellipse cx="416.0" cy="334.29" rx="207.69" ry="145.16" fill="#d06c2e"/>
<ellipse cx="416.0" cy="334.29" rx="202.69" ry="142.6" fill="#b55824"/>
<ellipse cx="416.0" cy="334.29" rx="201.89" ry="142.2" fill="#7e3c16"/>
<ellipse cx="416.0" cy="334.29" rx="201.29" ry="141.8" fill="#a29a30" mask="url(#ymask)"/>
<ellipse cx="416.0" cy="334.29" rx="198.29" ry="139.6" fill="#7e3c16"/>
<ellipse cx="416.0" cy="331.47" rx="205.28" ry="143.7" fill="#7e3c16"/>
<ellipse cx="416.0" cy="331.47" rx="204.78" ry="143.34" fill="#9a4a1d"/>
<ellipse cx="416.0" cy="331.47" rx="204.18" ry="142.85" fill="#b35726"/>
<ellipse cx="416.0" cy="331.47" rx="203.48" ry="142.27" fill="#c6632a"/>
<ellipse cx="416.0" cy="331.47" rx="202.68" ry="141.68" fill="#d06c2e"/>
<ellipse cx="416.0" cy="331.47" rx="197.68" ry="139.1" fill="#b55824"/>
<ellipse cx="416.0" cy="331.47" rx="196.88" ry="138.7" fill="#7e3c16"/>
<ellipse cx="416.0" cy="331.47" rx="196.28" ry="138.3" fill="#a29a30" mask="url(#ymask)"/>
<ellipse cx="416.0" cy="331.47" rx="193.28" ry="136.1" fill="#7e3c16"/>
<ellipse cx="416.0" cy="328.64" rx="200.07" ry="140.05" fill="#7e3c16"/>
<ellipse cx="416.0" cy="328.64" rx="199.57" ry="139.69" fill="#9a4a1d"/>
<ellipse cx="416.0" cy="328.64" rx="198.97" ry="139.2" fill="#b35726"/>
<ellipse cx="416.0" cy="328.64" rx="198.27" ry="138.62" fill="#c6632a"/>
<ellipse cx="416.0" cy="328.64" rx="197.47" ry="138.03" fill="#d06c2e"/>
<ellipse cx="416.0" cy="328.64" rx="192.47" ry="135.45" fill="#b55824"/>
<ellipse cx="416.0" cy="328.64" rx="191.67" ry="135.05" fill="#7e3c16"/>
<ellipse cx="416.0" cy="328.64" rx="191.07" ry="134.65" fill="#a29a30" mask="url(#ymask)"/>
<ellipse cx="416.0" cy="328.64" rx="188.07" ry="132.45" fill="#7e3c16"/>
<ellipse cx="416.0" cy="325.82" rx="194.63" ry="136.24" fill="#7e3c16"/>
<ellipse cx="416.0" cy="325.82" rx="194.13" ry="135.88" fill="#9a4a1d"/>
<ellipse cx="416.0" cy="325.82" rx="193.53" ry="135.4" fill="#b35726"/>
<ellipse cx="416.0" cy="325.82" rx="192.83" ry="134.81" fill="#c6632a"/>
<ellipse cx="416.0" cy="325.82" rx="192.03" ry="134.23" fill="#d06c2e"/>
<ellipse cx="416.0" cy="325.82" rx="187.03" ry="131.64" fill="#b55824"/>
<ellipse cx="416.0" cy="325.82" rx="186.23" ry="131.24" fill="#7e3c16"/>
<ellipse cx="416.0" cy="325.82" rx="185.63" ry="130.84" fill="#a29a30" mask="url(#ymask)"/>
<ellipse cx="416.0" cy="325.82" rx="182.63" ry="128.64" fill="#7e3c16"/>
<ellipse cx="416.0" cy="323" rx="188.95" ry="132.26" fill="#7e3c16"/>
<ellipse cx="416.0" cy="323" rx="188.45" ry="131.91" fill="#9a4a1d"/>
<ellipse cx="416.0" cy="323" rx="187.85" ry="131.42" fill="#b35726"/>
<ellipse cx="416.0" cy="323" rx="187.15" ry="130.83" fill="#c6632a"/>
<ellipse cx="416.0" cy="323" rx="186.35" ry="130.25" fill="#d06c2e"/>
<ellipse cx="416.0" cy="323" rx="181.35" ry="127.66" fill="#b55824"/>
<ellipse cx="416.0" cy="323" rx="180.55" ry="127.26" fill="#7e3c16"/>
<ellipse cx="416.0" cy="323" rx="179.95" ry="126.86" fill="#a29a30" mask="url(#ymask)"/>
<ellipse cx="416.0" cy="323" rx="176.95" ry="124.66" fill="#7e3c16"/>
<ellipse cx="416.0" cy="320.17" rx="183" ry="128.1" fill="#7e3c16"/>
<ellipse cx="416.0" cy="320.17" rx="182.5" ry="127.74" fill="#9a4a1d"/>
<ellipse cx="416.0" cy="320.17" rx="181.9" ry="127.26" fill="#b35726"/>
<ellipse cx="416.0" cy="320.17" rx="181.2" ry="126.67" fill="#c6632a"/>
<ellipse cx="416.0" cy="320.17" rx="180.4" ry="126.09" fill="#d06c2e"/>
<ellipse cx="416.0" cy="320.17" rx="175.4" ry="123.5" fill="#b55824"/>
<ellipse cx="416.0" cy="320.17" rx="174.6" ry="123.1" fill="#7e3c16"/>
<ellipse cx="416.0" cy="320.17" rx="174" ry="122.7" fill="#a29a30" mask="url(#ymask)"/>
<ellipse cx="416.0" cy="320.17" rx="171" ry="120.5" fill="#7e3c16"/>
<ellipse cx="416.0" cy="317.35" rx="176.76" ry="123.74" fill="#7e3c16"/>
<ellipse cx="416.0" cy="317.35" rx="176.26" ry="123.38" fill="#9a4a1d"/>
<ellipse cx="416.0" cy="317.35" rx="175.66" ry="122.89" fill="#b35726"/>
<ellipse cx="416.0" cy="317.35" rx="174.96" ry="122.31" fill="#c6632a"/>
<ellipse cx="416.0" cy="317.35" rx="174.16" ry="121.72" fill="#d06c2e"/>
<ellipse cx="416.0" cy="317.35" rx="169.16" ry="119.14" fill="#b55824"/>
<ellipse cx="416.0" cy="317.35" rx="168.36" ry="118.74" fill="#7e3c16"/>
<ellipse cx="416.0" cy="317.35" rx="167.76" ry="118.34" fill="#a29a30" mask="url(#ymask)"/>
<ellipse cx="416.0" cy="317.35" rx="164.76" ry="116.14" fill="#7e3c16"/>
<ellipse cx="416.0" cy="314.53" rx="170.2" ry="119.14" fill="#7e3c16"/>
<ellipse cx="416.0" cy="314.53" rx="169.7" ry="118.78" fill="#9a4a1d"/>
<ellipse cx="416.0" cy="314.53" rx="169.1" ry="118.3" fill="#b35726"/>
<ellipse cx="416.0" cy="314.53" rx="168.4" ry="117.71" fill="#c6632a"/>
<ellipse cx="416.0" cy="314.53" rx="167.6" ry="117.13" fill="#d06c2e"/>
<ellipse cx="416.0" cy="314.53" rx="162.6" ry="114.54" fill="#b55824"/>
<ellipse cx="416.0" cy="314.53" rx="161.8" ry="114.14" fill="#7e3c16"/>
<ellipse cx="416.0" cy="314.53" rx="161.2" ry="113.74" fill="#a29a30" mask="url(#ymask)"/>
<ellipse cx="416.0" cy="314.53" rx="158.2" ry="111.54" fill="#7e3c16"/>
<ellipse cx="416.0" cy="311.71" rx="163.28" ry="114.3" fill="#7e3c16"/>
<ellipse cx="416.0" cy="311.71" rx="162.78" ry="113.94" fill="#9a4a1d"/>
<ellipse cx="416.0" cy="311.71" rx="162.18" ry="113.45" fill="#b35726"/>
<ellipse cx="416.0" cy="311.71" rx="161.48" ry="112.87" fill="#c6632a"/>
<ellipse cx="416.0" cy="311.71" rx="160.68" ry="112.28" fill="#d06c2e"/>
<ellipse cx="416.0" cy="311.71" rx="155.68" ry="109.7" fill="#b55824"/>
<ellipse cx="416.0" cy="311.71" rx="154.88" ry="109.3" fill="#7e3c16"/>
<ellipse cx="416.0" cy="311.71" rx="154.28" ry="108.9" fill="#a29a30" mask="url(#ymask)"/>
<ellipse cx="416.0" cy="311.71" rx="151.28" ry="106.7" fill="#7e3c16"/>
<ellipse cx="416.0" cy="308.88" rx="155.94" ry="109.16" fill="#7e3c16"/>
<ellipse cx="416.0" cy="308.88" rx="155.44" ry="108.8" fill="#9a4a1d"/>
<ellipse cx="416.0" cy="308.88" rx="154.84" ry="108.32" fill="#b35726"/>
<ellipse cx="416.0" cy="308.88" rx="154.14" ry="107.73" fill="#c6632a"/>
<ellipse cx="416.0" cy="308.88" rx="153.34" ry="107.15" fill="#d06c2e"/>
<ellipse cx="416.0" cy="308.88" rx="148.34" ry="104.56" fill="#b55824"/>
<ellipse cx="416.0" cy="308.88" rx="147.54" ry="104.16" fill="#7e3c16"/>
<ellipse cx="416.0" cy="308.88" rx="146.94" ry="103.76" fill="#a29a30" mask="url(#ymask)"/>
<ellipse cx="416.0" cy="308.88" rx="143.94" ry="101.56" fill="#7e3c16"/>
<ellipse cx="416.0" cy="306.06" rx="148.14" ry="103.7" fill="#7e3c16"/>
<ellipse cx="416.0" cy="306.06" rx="147.64" ry="103.34" fill="#9a4a1d"/>
<ellipse cx="416.0" cy="306.06" rx="147.04" ry="102.85" fill="#b35726"/>
<ellipse cx="416.0" cy="306.06" rx="146.34" ry="102.27" fill="#c6632a"/>
<ellipse cx="416.0" cy="306.06" rx="145.54" ry="101.68" fill="#d06c2e"/>
<ellipse cx="416.0" cy="306.06" rx="140.54" ry="99.1" fill="#b55824"/>
<ellipse cx="416.0" cy="306.06" rx="139.74" ry="98.7" fill="#7e3c16"/>
<ellipse cx="416.0" cy="306.06" rx="139.14" ry="98.3" fill="#a29a30" mask="url(#ymask)"/>
<ellipse cx="416.0" cy="306.06" rx="136.14" ry="96.1" fill="#7e3c16"/>
<ellipse cx="416.0" cy="303.24" rx="139.78" ry="97.84" fill="#7e3c16"/>
<ellipse cx="416.0" cy="303.24" rx="139.28" ry="97.49" fill="#9a4a1d"/>
<ellipse cx="416.0" cy="303.24" rx="138.68" ry="97" fill="#b35726"/>
<ellipse cx="416.0" cy="303.24" rx="137.98" ry="96.41" fill="#c6632a"/>
<ellipse cx="416.0" cy="303.24" rx="137.18" ry="95.83" fill="#d06c2e"/>
<ellipse cx="416.0" cy="303.24" rx="132.18" ry="93.24" fill="#b55824"/>
<ellipse cx="416.0" cy="303.24" rx="131.38" ry="92.84" fill="#7e3c16"/>
<ellipse cx="416.0" cy="303.24" rx="130.78" ry="92.44" fill="#a29a30" mask="url(#ymask)"/>
<ellipse cx="416.0" cy="303.24" rx="127.78" ry="90.24" fill="#7e3c16"/>
<ellipse cx="416.0" cy="300.41" rx="130.76" ry="91.53" fill="#7e3c16"/>
<ellipse cx="416.0" cy="300.41" rx="130.26" ry="91.18" fill="#9a4a1d"/>
<ellipse cx="416.0" cy="300.41" rx="129.66" ry="90.69" fill="#b35726"/>
<ellipse cx="416.0" cy="300.41" rx="128.96" ry="90.1" fill="#c6632a"/>
<ellipse cx="416.0" cy="300.41" rx="128.16" ry="89.52" fill="#d06c2e"/>
<ellipse cx="416.0" cy="300.41" rx="123.16" ry="86.93" fill="#b55824"/>
<ellipse cx="416.0" cy="300.41" rx="122.36" ry="86.53" fill="#7e3c16"/>
<ellipse cx="416.0" cy="300.41" rx="121.76" ry="86.13" fill="#a29a30" mask="url(#ymask)"/>
<ellipse cx="416.0" cy="300.41" rx="118.76" ry="83.93" fill="#7e3c16"/>
<ellipse cx="416.0" cy="297.59" rx="120.94" ry="84.66" fill="#7e3c16"/>
<ellipse cx="416.0" cy="297.59" rx="120.44" ry="84.3" fill="#9a4a1d"/>
<ellipse cx="416.0" cy="297.59" rx="119.84" ry="83.82" fill="#b35726"/>
<ellipse cx="416.0" cy="297.59" rx="119.14" ry="83.23" fill="#c6632a"/>
<ellipse cx="416.0" cy="297.59" rx="118.34" ry="82.65" fill="#d06c2e"/>
<ellipse cx="416.0" cy="297.59" rx="113.34" ry="80.06" fill="#b55824"/>
<ellipse cx="416.0" cy="297.59" rx="112.54" ry="79.66" fill="#7e3c16"/>
<ellipse cx="416.0" cy="297.59" rx="111.94" ry="79.26" fill="#a29a30" mask="url(#ymask)"/>
<ellipse cx="416.0" cy="297.59" rx="108.94" ry="77.06" fill="#7e3c16"/>
<ellipse cx="416.0" cy="294.77" rx="110.11" ry="77.07" fill="#7e3c16"/>
<ellipse cx="416.0" cy="294.77" rx="109.61" ry="76.72" fill="#9a4a1d"/>
<ellipse cx="416.0" cy="294.77" rx="109.01" ry="76.23" fill="#b35726"/>
<ellipse cx="416.0" cy="294.77" rx="108.31" ry="75.64" fill="#c6632a"/>
<ellipse cx="416.0" cy="294.77" rx="107.51" ry="75.06" fill="#d06c2e"/>
<ellipse cx="416.0" cy="294.77" rx="103.91" ry="72.67" fill="#7e3c16"/>
<ellipse cx="416.0" cy="294.77" rx="103.31" ry="72.17" fill="url(#hatch1)"/>
<ellipse cx="416.0" cy="291.94" rx="97.91" ry="68.54" fill="#7e3c16"/>
<ellipse cx="416.0" cy="291.94" rx="97.41" ry="68.18" fill="#9a4a1d"/>
<ellipse cx="416.0" cy="291.94" rx="96.81" ry="67.69" fill="#b35726"/>
<ellipse cx="416.0" cy="291.94" rx="96.11" ry="67.11" fill="#c6632a"/>
<ellipse cx="416.0" cy="291.94" rx="95.31" ry="66.52" fill="#d06c2e"/>
<ellipse cx="416.0" cy="291.94" rx="91.71" ry="64.14" fill="#7e3c16"/>
<ellipse cx="416.0" cy="291.94" rx="91.11" ry="63.64" fill="url(#hatch0)"/>
<ellipse cx="416.0" cy="289.12" rx="83.77" ry="58.64" fill="#7e3c16"/>
<ellipse cx="416.0" cy="289.12" rx="83.27" ry="58.28" fill="#9a4a1d"/>
<ellipse cx="416.0" cy="289.12" rx="82.67" ry="57.8" fill="#b35726"/>
<ellipse cx="416.0" cy="289.12" rx="81.97" ry="57.21" fill="#c6632a"/>
<ellipse cx="416.0" cy="289.12" rx="81.17" ry="56.63" fill="#d06c2e"/>
<ellipse cx="416.0" cy="289.12" rx="77.57" ry="54.24" fill="#7e3c16"/>
<ellipse cx="416.0" cy="289.12" rx="76.97" ry="53.74" fill="url(#hatch1)"/>
<ellipse cx="416.0" cy="286.3" rx="66.46" ry="46.52" fill="#7e3c16"/>
<ellipse cx="416.0" cy="286.3" rx="65.96" ry="46.16" fill="#9a4a1d"/>
<ellipse cx="416.0" cy="286.3" rx="65.36" ry="45.68" fill="#b35726"/>
<ellipse cx="416.0" cy="286.3" rx="64.66" ry="45.09" fill="#c6632a"/>
<ellipse cx="416.0" cy="286.3" rx="63.86" ry="44.51" fill="#d06c2e"/>
<ellipse cx="416.0" cy="286.3" rx="60.26" ry="42.12" fill="#7e3c16"/>
<ellipse cx="416.0" cy="286.3" rx="59.66" ry="41.62" fill="url(#hatch0)"/>
<ellipse cx="416.0" cy="283.48" rx="42.22" ry="29.56" fill="#7e3c16"/>
<ellipse cx="416.0" cy="283.48" rx="41.72" ry="29.2" fill="#9a4a1d"/>
<ellipse cx="416.0" cy="283.48" rx="41.12" ry="28.71" fill="#b35726"/>
<ellipse cx="416.0" cy="283.48" rx="40.42" ry="28.13" fill="#c6632a"/>
<ellipse cx="416.0" cy="283.48" rx="39.62" ry="27.54" fill="#d06c2e"/>
<ellipse cx="416.0" cy="283.48" rx="36.02" ry="25.16" fill="#7e3c16"/>
<ellipse cx="416.0" cy="283.48" rx="35.42" ry="24.66" fill="url(#hatch1)"/><clipPath id="sil"><path d="M745.7,480.0 L746.3,485.8 L746.7,491.5 L747.1,497.4 L747.3,503.2 L747.5,509.0 L747.5,514.8 L747.4,520.7 L747.2,526.6 L747.0,532.4 L746.6,538.3 L746.1,544.2 L745.5,550.0 L744.8,555.9 L743.9,561.8 L743.0,567.6 L741.8,573.4 L740.4,579.2 L738.8,584.9 L737.0,590.5 L735.0,596.1 L732.8,601.6 L730.5,607.0 L727.9,612.4 L725.3,617.7 L722.4,622.9 L719.4,628.0 L716.3,633.0 L713.0,637.9 L709.5,642.7 L706.0,647.4 L702.3,652.0 L698.6,656.6 L694.7,661.0 L690.7,665.3 L686.6,669.5 L682.4,673.6 L678.2,677.6 L673.8,681.4 L669.4,685.2 L665.0,688.9 L660.4,692.5 L655.9,696.0 L651.2,699.3 L646.5,702.6 L641.8,705.8 L637.0,708.9 L632.2,711.8 L627.4,714.7 L622.5,717.5 L617.6,720.2 L612.7,722.8 L607.7,725.4 L602.7,727.8 L597.7,730.2 L592.7,732.4 L587.7,734.6 L582.7,736.7 L577.7,738.7 L572.6,740.7 L567.6,742.5 L562.5,744.3 L557.5,746.1 L552.4,747.7 L547.3,749.3 L542.3,750.8 L537.2,752.2 L532.1,753.6 L527.1,754.9 L522.0,756.1 L516.9,757.3 L511.9,758.4 L506.8,759.5 L501.7,760.4 L496.7,761.4 L491.6,762.2 L486.6,763.0 L481.5,763.8 L476.5,764.5 L471.4,765.1 L466.4,765.7 L461.3,766.2 L456.3,766.7 L451.2,767.1 L446.2,767.4 L441.2,767.7 L436.1,767.9 L431.1,768.1 L426.1,768.3 L421.0,768.4 L416.0,768.4 L411.0,768.4 L405.9,768.3 L400.9,768.1 L395.9,767.9 L390.8,767.7 L385.8,767.4 L380.8,767.1 L375.7,766.7 L370.7,766.2 L365.6,765.7 L360.6,765.1 L355.5,764.5 L350.5,763.8 L345.4,763.0 L340.4,762.2 L335.3,761.4 L330.3,760.4 L325.2,759.5 L320.1,758.4 L315.1,757.3 L310.0,756.1 L304.9,754.9 L299.9,753.6 L294.8,752.2 L289.7,750.8 L284.7,749.3 L279.6,747.7 L274.5,746.1 L269.5,744.3 L264.4,742.5 L259.4,740.7 L254.3,738.7 L249.3,736.7 L244.3,734.6 L239.3,732.4 L234.3,730.2 L229.3,727.8 L224.3,725.4 L219.3,722.8 L214.4,720.2 L209.5,717.5 L204.6,714.7 L199.8,711.8 L195.0,708.9 L190.2,705.8 L185.5,702.6 L180.8,699.3 L176.1,696.0 L171.6,692.5 L167.0,688.9 L162.6,685.2 L158.2,681.4 L153.8,677.6 L149.6,673.6 L145.4,669.5 L141.3,665.3 L137.3,661.0 L133.4,656.6 L129.7,652.0 L126.0,647.4 L122.5,642.7 L119.0,637.9 L115.7,633.0 L112.6,628.0 L109.6,622.9 L106.7,617.7 L104.1,612.4 L101.5,607.0 L99.2,601.6 L97.0,596.1 L95.0,590.5 L93.2,584.9 L91.6,579.2 L90.2,573.4 L89.0,567.6 L88.1,561.8 L87.2,555.9 L86.5,550.0 L85.9,544.2 L85.4,538.3 L85.0,532.4 L84.8,526.6 L84.6,520.7 L84.5,514.8 L84.5,509.0 L84.7,503.2 L84.9,497.4 L85.3,491.5 L85.7,485.8 L86.3,480.0 L86.9,474.3 L87.7,468.5 L88.5,462.8 L89.5,457.2 L90.5,451.5 L91.7,445.9 L92.9,440.3 L94.3,434.8 L95.7,429.3 L97.2,423.8 L98.8,418.3 L100.5,412.9 L102.3,407.6 L104.2,402.3 L106.2,397.0 L108.3,391.8 L110.4,386.6 L112.6,381.4 L115.0,376.3 L117.4,371.3 L119.8,366.3 L122.4,361.4 L125.0,356.5 L127.8,351.7 L130.5,346.9 L133.4,342.2 L136.4,337.5 L139.4,332.9 L142.5,328.4 L145.6,323.9 L148.8,319.5 L152.1,315.1 L155.5,310.8 L158.9,306.6 L162.4,302.4 L165.9,298.3 L169.5,294.3 L173.2,290.3 L176.9,286.4 L180.7,282.6 L184.5,278.8 L188.4,275.1 L192.4,271.5 L196.4,267.9 L200.4,264.4 L204.5,261.0 L208.7,257.7 L212.9,254.4 L217.1,251.2 L221.4,248.1 L225.7,245.0 L230.1,242.0 L234.5,239.1 L238.9,236.3 L243.4,233.5 L247.9,230.8 L252.5,228.2 L257.1,225.7 L261.7,223.2 L266.4,220.9 L271.1,218.6 L275.8,216.3 L280.6,214.2 L285.3,212.1 L290.1,210.1 L295.0,208.2 L299.8,206.3 L304.7,204.6 L309.6,202.9 L314.5,201.3 L319.5,199.7 L324.5,198.3 L329.5,196.9 L334.5,195.6 L339.5,194.4 L344.5,193.2 L349.6,192.2 L354.6,191.2 L359.7,190.3 L364.8,189.5 L369.9,188.7 L375.0,188.0 L380.1,187.5 L385.2,186.9 L390.3,186.5 L395.5,186.2 L400.6,185.9 L405.7,185.7 L410.9,185.6 L416.0,185.5 L421.1,185.6 L426.3,185.7 L431.4,185.9 L436.5,186.2 L441.7,186.5 L446.8,186.9 L451.9,187.5 L457.0,188.0 L462.1,188.7 L467.2,189.5 L472.3,190.3 L477.4,191.2 L482.4,192.2 L487.5,193.2 L492.5,194.4 L497.5,195.6 L502.5,196.9 L507.5,198.3 L512.5,199.7 L517.5,201.3 L522.4,202.9 L527.3,204.6 L532.2,206.3 L537.0,208.2 L541.9,210.1 L546.7,212.1 L551.4,214.2 L556.2,216.3 L560.9,218.6 L565.6,220.9 L570.3,223.2 L574.9,225.7 L579.5,228.2 L584.1,230.8 L588.6,233.5 L593.1,236.3 L597.5,239.1 L601.9,242.0 L606.3,245.0 L610.6,248.1 L614.9,251.2 L619.1,254.4 L623.3,257.7 L627.5,261.0 L631.6,264.4 L635.6,267.9 L639.6,271.5 L643.6,275.1 L647.5,278.8 L651.3,282.6 L655.1,286.4 L658.8,290.3 L662.5,294.3 L666.1,298.3 L669.6,302.4 L673.1,306.6 L676.5,310.8 L679.9,315.1 L683.2,319.5 L686.4,323.9 L689.5,328.4 L692.6,332.9 L695.6,337.5 L698.6,342.2 L701.5,346.9 L704.2,351.7 L707.0,356.5 L709.6,361.4 L712.2,366.3 L714.6,371.3 L717.0,376.3 L719.4,381.4 L721.6,386.6 L723.7,391.8 L725.8,397.0 L727.8,402.3 L729.7,407.6 L731.5,412.9 L733.2,418.3 L734.8,423.8 L736.3,429.3 L737.7,434.8 L739.1,440.3 L740.3,445.9 L741.5,451.5 L742.5,457.2 L743.5,462.8 L744.3,468.5 L745.1,474.3Z"/></clipPath>
<linearGradient id="rimfade" gradientUnits="userSpaceOnUse" x1="0" y1="180" x2="0" y2="640"><stop offset="0" stop-color="#fff" stop-opacity="1"/><stop offset="0.7" stop-color="#fff" stop-opacity="0.8"/><stop offset="1" stop-color="#fff" stop-opacity="0"/></linearGradient>
<mask id="rimmask"><rect x="0" y="0" width="900" height="900" fill="url(#rimfade)"/></mask>
<g clip-path="url(#sil)" mask="url(#rimmask)" fill="none" stroke="#3c1a06">
<path d="M745.7,480.0 L746.3,485.8 L746.7,491.5 L747.1,497.4 L747.3,503.2 L747.5,509.0 L747.5,514.8 L747.4,520.7 L747.2,526.6 L747.0,532.4 L746.6,538.3 L746.1,544.2 L745.5,550.0 L744.8,555.9 L743.9,561.8 L743.0,567.6 L741.8,573.4 L740.4,579.2 L738.8,584.9 L737.0,590.5 L735.0,596.1 L732.8,601.6 L730.5,607.0 L727.9,612.4 L725.3,617.7 L722.4,622.9 L719.4,628.0 L716.3,633.0 L713.0,637.9 L709.5,642.7 L706.0,647.4 L702.3,652.0 L698.6,656.6 L694.7,661.0 L690.7,665.3 L686.6,669.5 L682.4,673.6 L678.2,677.6 L673.8,681.4 L669.4,685.2 L665.0,688.9 L660.4,692.5 L655.9,696.0 L651.2,699.3 L646.5,702.6 L641.8,705.8 L637.0,708.9 L632.2,711.8 L627.4,714.7 L622.5,717.5 L617.6,720.2 L612.7,722.8 L607.7,725.4 L602.7,727.8 L597.7,730.2 L592.7,732.4 L587.7,734.6 L582.7,736.7 L577.7,738.7 L572.6,740.7 L567.6,742.5 L562.5,744.3 L557.5,746.1 L552.4,747.7 L547.3,749.3 L542.3,750.8 L537.2,752.2 L532.1,753.6 L527.1,754.9 L522.0,756.1 L516.9,757.3 L511.9,758.4 L506.8,759.5 L501.7,760.4 L496.7,761.4 L491.6,762.2 L486.6,763.0 L481.5,763.8 L476.5,764.5 L471.4,765.1 L466.4,765.7 L461.3,766.2 L456.3,766.7 L451.2,767.1 L446.2,767.4 L441.2,767.7 L436.1,767.9 L431.1,768.1 L426.1,768.3 L421.0,768.4 L416.0,768.4 L411.0,768.4 L405.9,768.3 L400.9,768.1 L395.9,767.9 L390.8,767.7 L385.8,767.4 L380.8,767.1 L375.7,766.7 L370.7,766.2 L365.6,765.7 L360.6,765.1 L355.5,764.5 L350.5,763.8 L345.4,763.0 L340.4,762.2 L335.3,761.4 L330.3,760.4 L325.2,759.5 L320.1,758.4 L315.1,757.3 L310.0,756.1 L304.9,754.9 L299.9,753.6 L294.8,752.2 L289.7,750.8 L284.7,749.3 L279.6,747.7 L274.5,746.1 L269.5,744.3 L264.4,742.5 L259.4,740.7 L254.3,738.7 L249.3,736.7 L244.3,734.6 L239.3,732.4 L234.3,730.2 L229.3,727.8 L224.3,725.4 L219.3,722.8 L214.4,720.2 L209.5,717.5 L204.6,714.7 L199.8,711.8 L195.0,708.9 L190.2,705.8 L185.5,702.6 L180.8,699.3 L176.1,696.0 L171.6,692.5 L167.0,688.9 L162.6,685.2 L158.2,681.4 L153.8,677.6 L149.6,673.6 L145.4,669.5 L141.3,665.3 L137.3,661.0 L133.4,656.6 L129.7,652.0 L126.0,647.4 L122.5,642.7 L119.0,637.9 L115.7,633.0 L112.6,628.0 L109.6,622.9 L106.7,617.7 L104.1,612.4 L101.5,607.0 L99.2,601.6 L97.0,596.1 L95.0,590.5 L93.2,584.9 L91.6,579.2 L90.2,573.4 L89.0,567.6 L88.1,561.8 L87.2,555.9 L86.5,550.0 L85.9,544.2 L85.4,538.3 L85.0,532.4 L84.8,526.6 L84.6,520.7 L84.5,514.8 L84.5,509.0 L84.7,503.2 L84.9,497.4 L85.3,491.5 L85.7,485.8 L86.3,480.0 L86.9,474.3 L87.7,468.5 L88.5,462.8 L89.5,457.2 L90.5,451.5 L91.7,445.9 L92.9,440.3 L94.3,434.8 L95.7,429.3 L97.2,423.8 L98.8,418.3 L100.5,412.9 L102.3,407.6 L104.2,402.3 L106.2,397.0 L108.3,391.8 L110.4,386.6 L112.6,381.4 L115.0,376.3 L117.4,371.3 L119.8,366.3 L122.4,361.4 L125.0,356.5 L127.8,351.7 L130.5,346.9 L133.4,342.2 L136.4,337.5 L139.4,332.9 L142.5,328.4 L145.6,323.9 L148.8,319.5 L152.1,315.1 L155.5,310.8 L158.9,306.6 L162.4,302.4 L165.9,298.3 L169.5,294.3 L173.2,290.3 L176.9,286.4 L180.7,282.6 L184.5,278.8 L188.4,275.1 L192.4,271.5 L196.4,267.9 L200.4,264.4 L204.5,261.0 L208.7,257.7 L212.9,254.4 L217.1,251.2 L221.4,248.1 L225.7,245.0 L230.1,242.0 L234.5,239.1 L238.9,236.3 L243.4,233.5 L247.9,230.8 L252.5,228.2 L257.1,225.7 L261.7,223.2 L266.4,220.9 L271.1,218.6 L275.8,216.3 L280.6,214.2 L285.3,212.1 L290.1,210.1 L295.0,208.2 L299.8,206.3 L304.7,204.6 L309.6,202.9 L314.5,201.3 L319.5,199.7 L324.5,198.3 L329.5,196.9 L334.5,195.6 L339.5,194.4 L344.5,193.2 L349.6,192.2 L354.6,191.2 L359.7,190.3 L364.8,189.5 L369.9,188.7 L375.0,188.0 L380.1,187.5 L385.2,186.9 L390.3,186.5 L395.5,186.2 L400.6,185.9 L405.7,185.7 L410.9,185.6 L416.0,185.5 L421.1,185.6 L426.3,185.7 L431.4,185.9 L436.5,186.2 L441.7,186.5 L446.8,186.9 L451.9,187.5 L457.0,188.0 L462.1,188.7 L467.2,189.5 L472.3,190.3 L477.4,191.2 L482.4,192.2 L487.5,193.2 L492.5,194.4 L497.5,195.6 L502.5,196.9 L507.5,198.3 L512.5,199.7 L517.5,201.3 L522.4,202.9 L527.3,204.6 L532.2,206.3 L537.0,208.2 L541.9,210.1 L546.7,212.1 L551.4,214.2 L556.2,216.3 L560.9,218.6 L565.6,220.9 L570.3,223.2 L574.9,225.7 L579.5,228.2 L584.1,230.8 L588.6,233.5 L593.1,236.3 L597.5,239.1 L601.9,242.0 L606.3,245.0 L610.6,248.1 L614.9,251.2 L619.1,254.4 L623.3,257.7 L627.5,261.0 L631.6,264.4 L635.6,267.9 L639.6,271.5 L643.6,275.1 L647.5,278.8 L651.3,282.6 L655.1,286.4 L658.8,290.3 L662.5,294.3 L666.1,298.3 L669.6,302.4 L673.1,306.6 L676.5,310.8 L679.9,315.1 L683.2,319.5 L686.4,323.9 L689.5,328.4 L692.6,332.9 L695.6,337.5 L698.6,342.2 L701.5,346.9 L704.2,351.7 L707.0,356.5 L709.6,361.4 L712.2,366.3 L714.6,371.3 L717.0,376.3 L719.4,381.4 L721.6,386.6 L723.7,391.8 L725.8,397.0 L727.8,402.3 L729.7,407.6 L731.5,412.9 L733.2,418.3 L734.8,423.8 L736.3,429.3 L737.7,434.8 L739.1,440.3 L740.3,445.9 L741.5,451.5 L742.5,457.2 L743.5,462.8 L744.3,468.5 L745.1,474.3Z" stroke-width="30" stroke-opacity="0.16"/>
<path d="M745.7,480.0 L746.3,485.8 L746.7,491.5 L747.1,497.4 L747.3,503.2 L747.5,509.0 L747.5,514.8 L747.4,520.7 L747.2,526.6 L747.0,532.4 L746.6,538.3 L746.1,544.2 L745.5,550.0 L744.8,555.9 L743.9,561.8 L743.0,567.6 L741.8,573.4 L740.4,579.2 L738.8,584.9 L737.0,590.5 L735.0,596.1 L732.8,601.6 L730.5,607.0 L727.9,612.4 L725.3,617.7 L722.4,622.9 L719.4,628.0 L716.3,633.0 L713.0,637.9 L709.5,642.7 L706.0,647.4 L702.3,652.0 L698.6,656.6 L694.7,661.0 L690.7,665.3 L686.6,669.5 L682.4,673.6 L678.2,677.6 L673.8,681.4 L669.4,685.2 L665.0,688.9 L660.4,692.5 L655.9,696.0 L651.2,699.3 L646.5,702.6 L641.8,705.8 L637.0,708.9 L632.2,711.8 L627.4,714.7 L622.5,717.5 L617.6,720.2 L612.7,722.8 L607.7,725.4 L602.7,727.8 L597.7,730.2 L592.7,732.4 L587.7,734.6 L582.7,736.7 L577.7,738.7 L572.6,740.7 L567.6,742.5 L562.5,744.3 L557.5,746.1 L552.4,747.7 L547.3,749.3 L542.3,750.8 L537.2,752.2 L532.1,753.6 L527.1,754.9 L522.0,756.1 L516.9,757.3 L511.9,758.4 L506.8,759.5 L501.7,760.4 L496.7,761.4 L491.6,762.2 L486.6,763.0 L481.5,763.8 L476.5,764.5 L471.4,765.1 L466.4,765.7 L461.3,766.2 L456.3,766.7 L451.2,767.1 L446.2,767.4 L441.2,767.7 L436.1,767.9 L431.1,768.1 L426.1,768.3 L421.0,768.4 L416.0,768.4 L411.0,768.4 L405.9,768.3 L400.9,768.1 L395.9,767.9 L390.8,767.7 L385.8,767.4 L380.8,767.1 L375.7,766.7 L370.7,766.2 L365.6,765.7 L360.6,765.1 L355.5,764.5 L350.5,763.8 L345.4,763.0 L340.4,762.2 L335.3,761.4 L330.3,760.4 L325.2,759.5 L320.1,758.4 L315.1,757.3 L310.0,756.1 L304.9,754.9 L299.9,753.6 L294.8,752.2 L289.7,750.8 L284.7,749.3 L279.6,747.7 L274.5,746.1 L269.5,744.3 L264.4,742.5 L259.4,740.7 L254.3,738.7 L249.3,736.7 L244.3,734.6 L239.3,732.4 L234.3,730.2 L229.3,727.8 L224.3,725.4 L219.3,722.8 L214.4,720.2 L209.5,717.5 L204.6,714.7 L199.8,711.8 L195.0,708.9 L190.2,705.8 L185.5,702.6 L180.8,699.3 L176.1,696.0 L171.6,692.5 L167.0,688.9 L162.6,685.2 L158.2,681.4 L153.8,677.6 L149.6,673.6 L145.4,669.5 L141.3,665.3 L137.3,661.0 L133.4,656.6 L129.7,652.0 L126.0,647.4 L122.5,642.7 L119.0,637.9 L115.7,633.0 L112.6,628.0 L109.6,622.9 L106.7,617.7 L104.1,612.4 L101.5,607.0 L99.2,601.6 L97.0,596.1 L95.0,590.5 L93.2,584.9 L91.6,579.2 L90.2,573.4 L89.0,567.6 L88.1,561.8 L87.2,555.9 L86.5,550.0 L85.9,544.2 L85.4,538.3 L85.0,532.4 L84.8,526.6 L84.6,520.7 L84.5,514.8 L84.5,509.0 L84.7,503.2 L84.9,497.4 L85.3,491.5 L85.7,485.8 L86.3,480.0 L86.9,474.3 L87.7,468.5 L88.5,462.8 L89.5,457.2 L90.5,451.5 L91.7,445.9 L92.9,440.3 L94.3,434.8 L95.7,429.3 L97.2,423.8 L98.8,418.3 L100.5,412.9 L102.3,407.6 L104.2,402.3 L106.2,397.0 L108.3,391.8 L110.4,386.6 L112.6,381.4 L115.0,376.3 L117.4,371.3 L119.8,366.3 L122.4,361.4 L125.0,356.5 L127.8,351.7 L130.5,346.9 L133.4,342.2 L136.4,337.5 L139.4,332.9 L142.5,328.4 L145.6,323.9 L148.8,319.5 L152.1,315.1 L155.5,310.8 L158.9,306.6 L162.4,302.4 L165.9,298.3 L169.5,294.3 L173.2,290.3 L176.9,286.4 L180.7,282.6 L184.5,278.8 L188.4,275.1 L192.4,271.5 L196.4,267.9 L200.4,264.4 L204.5,261.0 L208.7,257.7 L212.9,254.4 L217.1,251.2 L221.4,248.1 L225.7,245.0 L230.1,242.0 L234.5,239.1 L238.9,236.3 L243.4,233.5 L247.9,230.8 L252.5,228.2 L257.1,225.7 L261.7,223.2 L266.4,220.9 L271.1,218.6 L275.8,216.3 L280.6,214.2 L285.3,212.1 L290.1,210.1 L295.0,208.2 L299.8,206.3 L304.7,204.6 L309.6,202.9 L314.5,201.3 L319.5,199.7 L324.5,198.3 L329.5,196.9 L334.5,195.6 L339.5,194.4 L344.5,193.2 L349.6,192.2 L354.6,191.2 L359.7,190.3 L364.8,189.5 L369.9,188.7 L375.0,188.0 L380.1,187.5 L385.2,186.9 L390.3,186.5 L395.5,186.2 L400.6,185.9 L405.7,185.7 L410.9,185.6 L416.0,185.5 L421.1,185.6 L426.3,185.7 L431.4,185.9 L436.5,186.2 L441.7,186.5 L446.8,186.9 L451.9,187.5 L457.0,188.0 L462.1,188.7 L467.2,189.5 L472.3,190.3 L477.4,191.2 L482.4,192.2 L487.5,193.2 L492.5,194.4 L497.5,195.6 L502.5,196.9 L507.5,198.3 L512.5,199.7 L517.5,201.3 L522.4,202.9 L527.3,204.6 L532.2,206.3 L537.0,208.2 L541.9,210.1 L546.7,212.1 L551.4,214.2 L556.2,216.3 L560.9,218.6 L565.6,220.9 L570.3,223.2 L574.9,225.7 L579.5,228.2 L584.1,230.8 L588.6,233.5 L593.1,236.3 L597.5,239.1 L601.9,242.0 L606.3,245.0 L610.6,248.1 L614.9,251.2 L619.1,254.4 L623.3,257.7 L627.5,261.0 L631.6,264.4 L635.6,267.9 L639.6,271.5 L643.6,275.1 L647.5,278.8 L651.3,282.6 L655.1,286.4 L658.8,290.3 L662.5,294.3 L666.1,298.3 L669.6,302.4 L673.1,306.6 L676.5,310.8 L679.9,315.1 L683.2,319.5 L686.4,323.9 L689.5,328.4 L692.6,332.9 L695.6,337.5 L698.6,342.2 L701.5,346.9 L704.2,351.7 L707.0,356.5 L709.6,361.4 L712.2,366.3 L714.6,371.3 L717.0,376.3 L719.4,381.4 L721.6,386.6 L723.7,391.8 L725.8,397.0 L727.8,402.3 L729.7,407.6 L731.5,412.9 L733.2,418.3 L734.8,423.8 L736.3,429.3 L737.7,434.8 L739.1,440.3 L740.3,445.9 L741.5,451.5 L742.5,457.2 L743.5,462.8 L744.3,468.5 L745.1,474.3Z" stroke-width="16" stroke-opacity="0.2"/>
</g><path d="M327.7,255.2 Q348.3,237.3 378.5,226.6 Q354.1,241.6 327.7,255.2Z" fill="#d9d9d9"/><path d="M349.8,264.5 Q367.8,247.7 395,238.6 Q373.3,252.3 349.8,264.5Z" fill="#d9d9d9"/><path d="M383,273.7 Q391.9,261.9 409,259 Q396.8,267.2 383,273.7Z" fill="#d9d9d9"/><path d="M460.6,237.7 Q485.3,251.5 499.4,270.9 Q478.9,254.9 460.6,237.7Z" fill="#d9d9d9"/><path d="M440.3,247.8 Q461.9,258.4 473.5,275.5 Q455.9,262.3 440.3,247.8Z" fill="#d9d9d9"/><path d="M358,295.8 Q369.4,312.4 391.4,323.5 Q375.8,309.1 358,295.8Z" fill="#d9d9d9"/><path d="M332.3,312.5 Q346.1,332.3 370,345.7 Q352.2,328.5 332.3,312.5Z" fill="#d9d9d9"/><path d="M422.8,307 Q440.4,302.6 447.7,292 Q434.2,298.9 422.8,307Z" fill="#d9d9d9"/><path d="M437.5,338.3 Q464.2,329.8 481.8,313.4 Q458.7,325.1 437.5,338.3Z" fill="#d9d9d9"/><path d="M453.2,362.3 Q482.4,352.2 503,333.7 Q477.2,347.2 453.2,362.3Z" fill="#d9d9d9"/><path d="M523.0,303.2 L523.5,303.4 L524.1,303.6 L524.8,303.9 L525.5,304.2 L526.3,304.5 L527.2,304.9 L528.0,305.2 L529.0,305.6 L530.0,306.0 L531.0,306.4 L532.1,306.8 L533.1,307.3 L534.2,307.7 L535.4,308.2 L536.5,308.6 L537.6,309.1 L538.8,309.5 L539.9,310.0 L541.1,310.4 L542.2,310.9 L543.3,311.4 L544.5,311.8 L545.7,312.3 L546.9,312.7 L548.1,313.2 L549.4,313.7 L550.7,314.2 L551.9,314.7 L553.2,315.2 L554.5,315.7 L555.9,316.2 L557.2,316.7 L558.5,317.2 L559.8,317.8 L561.2,318.3 L562.5,318.9 L563.8,319.4 L565.1,320.0 L566.4,320.5 L567.7,321.1 L569.0,321.7 L570.3,322.3 L571.5,322.9 L572.8,323.5 L574.1,324.1 L575.4,324.8 L576.7,325.4 L577.9,326.0 L579.2,326.7 L580.5,327.3 L581.8,328.0 L583.1,328.7 L584.3,329.3 L585.6,330.0 L586.9,330.7 L588.2,331.3 L589.5,332.0 L590.7,332.6 L592.0,333.3 L593.3,333.9 L594.6,334.5 L595.8,335.1 L597.1,335.7 L598.3,336.3 L599.6,336.8 L600.8,337.4 L602.0,337.9 L603.3,338.5 L604.5,339.0 L605.8,339.6 L607.0,340.2 L608.3,340.7 L609.5,341.4 L610.8,342.0 L612.1,342.7 L613.4,343.3 L614.7,344.1 L616.1,344.8 L617.4,345.6 L618.8,346.5 L620.2,347.4 L621.6,348.4 L623.1,349.4 L624.6,350.4 L626.1,351.5 L627.7,352.6 L629.2,353.8 L630.8,354.9 L632.3,356.1 L633.9,357.3 L635.5,358.5 L637.0,359.7 L638.6,360.9 L640.1,362.2 L641.7,363.4 L643.2,364.6 L644.6,365.7 L646.1,366.9 L647.5,368.0 L648.9,369.1 L650.2,370.2 L651.6,371.2 L652.9,372.2 L654.1,373.2 L655.4,374.2 L656.6,375.2 L657.9,376.2 L659.1,377.2 L660.3,378.1 L661.4,379.1 L662.6,380.1 L663.8,381.1 L665.0,382.1 L666.2,383.1 L667.3,384.1 L668.5,385.2 L669.7,386.2 L670.9,387.3 L672.1,388.4 L673.3,389.6 L674.5,390.8 L675.8,392.0 L677.0,393.3 L678.3,394.6 L679.6,395.9 L680.9,397.2 L682.2,398.5 L683.4,399.9 L684.7,401.3 L686.0,402.6 L687.3,404.0 L688.5,405.4 L689.7,406.8 L691.0,408.1 L692.2,409.5 L693.4,410.8 L694.5,412.2 L695.6,413.5 L696.7,414.7 L697.8,416.0 L698.8,417.2 L699.9,418.5 L700.8,419.7 L701.8,420.9 L702.8,422.1 L703.7,423.3 L704.6,424.4 L705.5,425.6 L706.4,426.8 L707.3,427.9 L708.1,429.1 L709.0,430.2 L709.8,431.3 L710.6,432.4 L711.4,433.6 L712.2,434.7 L713.0,435.8 L713.7,436.8 L714.5,437.9 L715.2,439.0 L715.9,440.0 L716.6,441.1 L717.3,442.0 L717.9,443.0 L718.5,443.9 L719.2,444.9 L719.7,445.8 L720.3,446.7 L720.9,447.6 L721.5,448.5 L722.0,449.4 L722.6,450.3 L723.1,451.2 L723.6,452.2 L724.2,453.2 L724.7,454.2 L725.3,455.3 L725.8,456.4 L726.4,457.5 L727.0,458.7 L727.6,460.0 L728.2,461.3 L728.8,462.6 L729.5,464.1 L730.1,465.5 L730.7,467.0 L731.4,468.6 L732.0,470.1 L732.7,471.7 L733.3,473.2 L733.9,474.8 L734.5,476.4 L735.1,477.9 L735.7,479.5 L736.3,481.0 L736.8,482.5 L737.3,483.9 L737.8,485.3 L738.3,486.7 L738.7,488.0 L739.1,489.3 L739.5,490.5 L739.8,491.6 L740.2,492.8 L740.5,493.9 L740.8,495.0 L741.0,496.1 L741.3,497.1 L741.5,498.1 L741.8,499.2 L742.0,500.2 L742.2,501.2 L742.4,502.2 L742.6,503.2 L742.7,504.3 L742.9,505.3 L743.1,506.3 L743.3,507.4 L743.4,508.5 L743.6,509.6 L743.8,510.7 L743.9,511.8 L744.1,512.9 L744.2,514.0 L744.4,515.1 L744.5,516.2 L744.6,517.4 L744.8,518.5 L744.9,519.6 L745.0,520.7 L745.1,521.9 L745.2,523.0 L745.2,524.2 L745.3,525.4 L745.4,526.6 L745.4,527.8 L745.5,529.1 L745.5,530.3 L745.6,531.7 L745.6,533.0 L745.6,534.4 L745.6,535.9 L745.6,537.5 L745.6,539.2 L745.5,540.9 L745.5,542.7 L745.4,544.5 L745.4,546.3 L745.3,548.2 L745.2,550.0 L745.1,551.7 L745.1,553.5 L745.0,555.1 L744.9,556.7 L744.9,558.3 L744.8,559.7 L744.7,561.0 L744.7,562.1 L744.6,563.1 L744.6,564.0" fill="none" stroke="#b0b0b0" stroke-width="4.2" stroke-linecap="round"/><circle cx="523.0" cy="303.2" r="2.90" fill="#dadada"/><circle cx="528.0" cy="305.2" r="2.89" fill="#dadada"/><circle cx="533.1" cy="307.3" r="2.87" fill="#dadada"/><circle cx="537.6" cy="309.1" r="2.86" fill="#dadada"/><circle cx="542.2" cy="310.9" r="2.85" fill="#dadada"/><circle cx="546.9" cy="312.7" r="2.83" fill="#dadada"/><circle cx="551.9" cy="314.7" r="2.82" fill="#dadada"/><circle cx="557.2" cy="316.7" r="2.81" fill="#dadada"/><circle cx="562.5" cy="318.9" r="2.79" fill="#dadada"/><circle cx="567.7" cy="321.1" r="2.78" fill="#dadada"/><circle cx="572.8" cy="323.5" r="2.76" fill="#dadada"/><circle cx="577.9" cy="326.0" r="2.75" fill="#dadada"/><circle cx="583.1" cy="328.7" r="2.74" fill="#dadada"/><circle cx="588.2" cy="331.3" r="2.72" fill="#dadada"/><circle cx="593.3" cy="333.9" r="2.71" fill="#dadada"/><circle cx="598.3" cy="336.3" r="2.70" fill="#dadada"/><circle cx="603.3" cy="338.5" r="2.68" fill="#dadada"/><circle cx="608.3" cy="340.7" r="2.67" fill="#dadada"/><circle cx="613.4" cy="343.3" r="2.66" fill="#dadada"/><circle cx="617.4" cy="345.6" r="2.64" fill="#dadada"/><circle cx="621.6" cy="348.4" r="2.63" fill="#dadada"/><circle cx="626.1" cy="351.5" r="2.62" fill="#dadada"/><circle cx="630.8" cy="354.9" r="2.60" fill="#dadada"/><circle cx="635.5" cy="358.5" r="2.59" fill="#dadada"/><circle cx="640.1" cy="362.2" r="2.58" fill="#dadada"/><circle cx="644.6" cy="365.7" r="2.56" fill="#dadada"/><circle cx="648.9" cy="369.1" r="2.55" fill="#dadada"/><circle cx="652.9" cy="372.2" r="2.54" fill="#dadada"/><circle cx="656.6" cy="375.2" r="2.52" fill="#dadada"/><circle cx="660.3" cy="378.1" r="2.51" fill="#dadada"/><circle cx="663.8" cy="381.1" r="2.49" fill="#dadada"/><circle cx="667.3" cy="384.1" r="2.48" fill="#dadada"/><circle cx="670.9" cy="387.3" r="2.47" fill="#dadada"/><circle cx="674.5" cy="390.8" r="2.45" fill="#dadada"/><circle cx="678.3" cy="394.6" r="2.44" fill="#dadada"/><circle cx="682.2" cy="398.5" r="2.43" fill="#dadada"/><circle cx="686.0" cy="402.6" r="2.41" fill="#dadada"/><circle cx="689.7" cy="406.8" r="2.40" fill="#dadada"/><circle cx="693.4" cy="410.8" r="2.39" fill="#dadada"/><circle cx="696.7" cy="414.7" r="2.37" fill="#dadada"/><circle cx="699.9" cy="418.5" r="2.36" fill="#dadada"/><circle cx="702.8" cy="422.1" r="2.35" fill="#dadada"/><circle cx="705.5" cy="425.6" r="2.33" fill="#dadada"/><circle cx="708.1" cy="429.1" r="2.32" fill="#dadada"/><circle cx="711.4" cy="433.6" r="2.31" fill="#dadada"/><circle cx="714.5" cy="437.9" r="2.29" fill="#dadada"/><circle cx="717.3" cy="442.0" r="2.28" fill="#dadada"/><circle cx="719.7" cy="445.8" r="2.26" fill="#dadada"/><circle cx="722.0" cy="449.4" r="2.25" fill="#dadada"/><circle cx="724.2" cy="453.2" r="2.24" fill="#dadada"/><circle cx="726.4" cy="457.5" r="2.22" fill="#dadada"/><circle cx="728.8" cy="462.6" r="2.21" fill="#dadada"/><circle cx="730.7" cy="467.0" r="2.20" fill="#dadada"/><circle cx="732.7" cy="471.7" r="2.18" fill="#dadada"/><circle cx="734.5" cy="476.4" r="2.17" fill="#dadada"/><circle cx="736.3" cy="481.0" r="2.16" fill="#dadada"/><circle cx="737.8" cy="485.3" r="2.14" fill="#dadada"/><circle cx="739.5" cy="490.5" r="2.13" fill="#dadada"/><circle cx="740.8" cy="495.0" r="2.12" fill="#dadada"/><circle cx="741.8" cy="499.2" r="2.10" fill="#dadada"/><circle cx="742.6" cy="503.2" r="2.09" fill="#dadada"/><circle cx="743.3" cy="507.4" r="2.08" fill="#dadada"/><circle cx="743.9" cy="511.8" r="2.06" fill="#dadada"/><circle cx="744.5" cy="516.2" r="2.05" fill="#dadada"/><circle cx="745.0" cy="520.7" r="2.04" fill="#dadada"/><circle cx="745.3" cy="525.4" r="2.02" fill="#dadada"/><circle cx="745.5" cy="530.3" r="2.01" fill="#dadada"/><circle cx="745.6" cy="534.4" r="1.99" fill="#dadada"/><circle cx="745.6" cy="539.2" r="1.98" fill="#dadada"/><circle cx="745.4" cy="544.5" r="1.97" fill="#dadada"/><circle cx="745.2" cy="550.0" r="1.95" fill="#dadada"/><circle cx="745.0" cy="555.1" r="1.94" fill="#dadada"/><circle cx="744.8" cy="559.7" r="1.93" fill="#dadada"/><circle cx="744.6" cy="564.0" r="1.91" fill="#dadada"/><path d="M448.5,287.5 Q452,281.5 459.5,285.5 L458.5,289.5 Q454,287 449.5,289.5Z" fill="#e2e2e2"/><path d="M472.8,292.5 Q476.3,286.5 483.8,290.5 L482.8,294.5 Q478.3,292 473.8,294.5Z" fill="#e2e2e2"/><path d="M488.1,296.4 Q491.6,290.4 499.1,294.4 L498.1,298.4 Q493.6,295.9 489.1,298.4Z" fill="#e2e2e2"/><path d="M503.5,300.2 Q507,294.2 514.5,298.2 L513.5,302.2 Q509,299.7 504.5,302.2Z" fill="#e2e2e2"/>
<rect x="-4" y="-4" width="130.2" height="141.6" rx="4" fill="#8e8e8e" opacity="0.97"/>
<defs><pattern id="dots" patternUnits="userSpaceOnUse" width="3" height="3"><rect width="3" height="3" fill="#8d8d8d"/><rect x="1" y="1" width="1" height="1" fill="#808080"/></pattern></defs>
<rect x="13" y="14.4" width="96.5" height="99" fill="url(#dots)"/>
<line x1="0" y1="92.2" x2="126" y2="100.8" stroke="#b4b4b4" stroke-width="1" stroke-dasharray="6 2"/>
<rect x="6.6" y="8.1" width="109.1" height="109.2" rx="2.5" fill="none" stroke="#3f8fd6" stroke-width="2.7"/>
<text x="22" y="35.3" font-family="Liberation Sans" font-size="15" fill="#e0e0e0">1</text>
<radialGradient id="sph" cx="0.4" cy="0.35" r="0.7"><stop offset="0" stop-color="#f4f4f4"/><stop offset="0.6" stop-color="#d8d8d8"/><stop offset="1" stop-color="#a8a8a8"/></radialGradient>
<circle cx="38" cy="54.3" r="2.9" fill="url(#sph)"/><circle cx="29.3" cy="61.1" r="1.4" fill="#e8e8e8"/><circle cx="87.9" cy="63.1" r="7.6" fill="url(#sph)"/>
<g>
<path d="M33,823.8 L96.8,827.7 L95.7,878 L93.6,916 L27.7,914 L27.7,861.7 Z" fill="#c6c7c6"/>
<path d="M33,823.8 L96.8,827.7 L95.7,866 L29,861.7Z" fill="#c9c9c9"/>
<g stroke="#a4a4a4" stroke-width="0.8" stroke-dasharray="3 3" fill="none">
<path d="M36,835.5 L95,838.5"/><path d="M30,857.5 L95,861"/><path d="M48.5,828 L44,866"/><path d="M80.5,829 L77,868"/>
</g>
<text x="61.7" y="851.5" text-anchor="middle" font-family="Liberation Sans" font-size="10.5" letter-spacing="1" fill="#4a4a4a" transform="rotate(3 61.7 851.5)">Top</text>
<text x="58.5" y="897" text-anchor="middle" font-family="Liberation Sans" font-size="10.5" letter-spacing="1" fill="#4a4a4a" transform="rotate(3 58.5 897)">Front</text>
<path d="M27.2,916 V871" stroke="#6a94c8" stroke-width="1.6"/>
<path d="M22,874 L27.2,864 L32.5,874Z" fill="#6a94c8"/>
<path d="M28,915.5 L92,918" stroke="#c8784c" stroke-width="1.6"/>
<path d="M86,913.5 L95,918.3 L86,922.5Z" fill="#c8784c"/>
<text x="22" y="858" font-family="Liberation Sans" font-size="8" fill="#9a9a9a">Z</text>
<text x="107" y="921" font-family="Liberation Sans" font-size="8" fill="#9a9a9a">X</text>
</g>
<circle cx="152.8" cy="902.3" r="18.2" fill="#d8dad8"/>
<g stroke="#5c5c5c" stroke-width="1.5" fill="none" stroke-linecap="butt" stroke-linejoin="round">
<path d="M143.3,899 v-3.2 a2,2 0 0 1 2,-2 h3.2"/><path d="M157,893.8 h3.2 a2,2 0 0 1 2,2 v3.2"/>
<path d="M162.2,907 v3.2 a2,2 0 0 1 -2,2 h-3.2"/><path d="M148.5,912.2 h-3.2 a2,2 0 0 1 -2,-2 v-3.2"/>
<path d="M152.8,897.3 l5.4,3.1 v6 l-5.4,3.1 l-5.4,-3.1 v-6z M147.4,900.4 l5.4,3.1 l5.4,-3.1 M152.8,903.5 v6.1"/>
</g>
<rect x="283.3" y="888.8" width="790" height="24" rx="12" fill="#fff"/>
<rect x="289.3" y="895.1" width="772" height="11.8" rx="5.9" fill="#00ae42"/>
<circle cx="1061" cy="900.7" r="12" fill="#fff"/><circle cx="1061" cy="900.7" r="9.7" fill="#00ae42"/>
<path d="M1081.2,893.3 a2,2 0 0 1 2,-2 h20.6 a2,2 0 0 1 2,2 v15 a2,2 0 0 1 -2,2 h-20.6 a2,2 0 0 1 -2,-2 v-5 l-5.5,-2.5 l5.5,-2.5z" fill="#fff"/>
<text x="1093.5" y="905" text-anchor="middle" font-family="Liberation Sans" font-size="11.5" fill="#00ae42">70</text>
<rect x="1364.4" y="117" width="24" height="700" rx="12" fill="#fff"/>
<rect x="1369.8" y="129" width="12.6" height="676" fill="#00ae42"/>
<circle cx="1376.3" cy="129" r="12" fill="#fff"/><circle cx="1376.3" cy="129" r="9.8" fill="#00ae42"/>
<path d="M1376.3,123.5V134.5M1370.8,129H1381.8" stroke="#fff" stroke-width="1.3"/>
<circle cx="1375.9" cy="804.6" r="11.6" fill="#fff"/><circle cx="1375.9" cy="804.6" r="9.6" fill="#00ae42"/>
<path d="M1312,96.7 a2,2 0 0 1 2,-2 h38.7 a2,2 0 0 1 2,2 v26.3 l7,6 h-7.5 h-38.2 a2,2 0 0 1 -2,-2z" fill="#fff"/>
<text x="1334" y="108.8" text-anchor="middle" font-family="Liberation Sans" font-size="12" fill="#00ae42">91</text>
<text x="1334" y="123.6" text-anchor="middle" font-family="Liberation Sans" font-size="12" fill="#00ae42">18.20</text>
<path d="M1315.8,807 a2,2 0 0 1 2,-2 h35.5 l10,-1 l-8.3,6 v26.7 a2,2 0 0 1 -2,2 h-35.2 a2,2 0 0 1 -2,-2z" fill="#fff"/>
<text x="1335.5" y="818.6" text-anchor="middle" font-family="Liberation Sans" font-size="12" fill="#00ae42">1</text>
<text x="1335.5" y="833.4" text-anchor="middle" font-family="Liberation Sans" font-size="12" fill="#00ae42">0.20</text>
<g fill="#00ae42" stroke="#f4f4f4" stroke-width="1.3" stroke-linejoin="round">
<path d="M1365.2,905.6 l10.5,-5.2 l10.5,5.2 l-10.5,5.2z"/>
<path d="M1365.2,901.3 l10.5,-5.2 l10.5,5.2 l-10.5,5.2z"/>
<path d="M1365.2,896.8 l10.5,-5.2 l10.5,5.2 l-10.5,5.2z"/>
</g>
</svg>
<div id="pn">
<div id="hd"></div><div id="bd"></div><div id="wh"></div>
<span class="b" style="left:12.3px;top:10.2px;">Slicing Result</span>
<svg style="position:absolute;left:440px;top:8.8px" width="16" height="14"><path d="M2.5,7.5 L8,2.5 L13.5,7.5 M2.5,12 L8,7 L13.5,12" fill="none" stroke="#e8e8e8" stroke-width="1.2"/></svg>
<span class="b" style="left:12.3px;top:37.1px;">Color Scheme</span>
<div id="dd"></div>
<svg style="position:absolute;left:109px;top:40px" width="14" height="10"><path d="M2,3.5 L7,7 L12,3.5" fill="none" stroke="#e0e0e0" stroke-width="1.2"/></svg>
<span class="t" style="left:129.3px;top:38.4px;">Line Type</span>
<span class="b" style="left:12.3px;top:61.9px;">Line Type</span>
<span class="b" style="left:138.9px;top:61.9px;">Time</span>
<span class="b" style="left:193.4px;top:61.9px;">Percent</span>
<span class="b" style="left:254.7px;top:61.9px;">Used filament</span>
<span class="b" style="left:394.5px;top:61.9px;">Display</span>
<div class="hl" style="top:79.2px"></div>
<div class="sw" style="left:13px;top:85.6px;background:#ffe61a"></div>
<span class="t" style="left:30.3px;top:83.6px;">Inner wall</span>
<span class="n" style="left:138.9px;top:85.4px;">1m28s</span>
<span class="n" style="left:193.4px;top:85.4px;">7.0%</span>
<span class="n" style="left:254.7px;top:85.4px;">0.28 m</span>
<span class="n" style="left:315.2px;top:85.4px;">0.85 g</span>
<div class="cb" style="top:82.9px"></div>
<svg class="ck" style="top:82.9px" width="15" height="15"><path d="M2.3,8.3 L6,11.3 L12.6,4.8" fill="none" stroke="#00c23f" stroke-width="2.2" stroke-linecap="round" stroke-linejoin="round"/></svg>
<div class="sw" style="left:13px;top:106.6px;background:#e56a2c"></div>
<span class="t" style="left:30.3px;top:104.6px;">Outer wall</span>
<span class="n" style="left:138.9px;top:106.4px;">1m53s</span>
<span class="n" style="left:193.4px;top:106.4px;">9.0%</span>
<span class="n" style="left:254.7px;top:106.4px;">0.27 m</span>
<span class="n" style="left:315.2px;top:106.4px;">0.83 g</span>
<div class="cb" style="top:103.9px"></div>
<svg class="ck" style="top:103.9px" width="15" height="15"><path d="M2.3,8.3 L6,11.3 L12.6,4.8" fill="none" stroke="#00c23f" stroke-width="2.2" stroke-linecap="round" stroke-linejoin="round"/></svg>
<div class="sw" style="left:13px;top:127.6px;background:#c83434"></div>
<span class="t" style="left:30.3px;top:125.6px;">Sparse infill</span>
<span class="n" style="left:138.9px;top:127.4px;">2m24s</span>
<span class="n" style="left:193.4px;top:127.4px;">11.4%</span>
<span class="n" style="left:254.7px;top:127.4px;">0.61 m</span>
<span class="n" style="left:315.2px;top:127.4px;">1.84 g</span>
<div class="cb" style="top:124.9px"></div>
<svg class="ck" style="top:124.9px" width="15" height="15"><path d="M2.3,8.3 L6,11.3 L12.6,4.8" fill="none" stroke="#00c23f" stroke-width="2.2" stroke-linecap="round" stroke-linejoin="round"/></svg>
<div class="sw" style="left:13px;top:148.6px;background:#b048e0;background-image:radial-gradient(#5a50d0 0.9px,transparent 1.1px);background-size:3px 3px"></div>
<span class="t" style="left:30.3px;top:146.6px;">Internal solid infill</span>
<span class="n" style="left:138.9px;top:148.4px;">2m17s</span>
<span class="n" style="left:193.4px;top:148.4px;">10.9%</span>
<span class="n" style="left:254.7px;top:148.4px;">0.41 m</span>
<span class="n" style="left:315.2px;top:148.4px;">1.25 g</span>
<div class="cb" style="top:145.9px"></div>
<svg class="ck" style="top:145.9px" width="15" height="15"><path d="M2.3,8.3 L6,11.3 L12.6,4.8" fill="none" stroke="#00c23f" stroke-width="2.2" stroke-linecap="round" stroke-linejoin="round"/></svg>
<div class="sw" style="left:13px;top:169.6px;background:#d8402a;background-image:radial-gradient(#f08a3a 0.9px,transparent 1.1px);background-size:3px 3px"></div>
<span class="t" style="left:30.3px;top:167.6px;">Top surface</span>
<span class="n" style="left:138.9px;top:169.4px;">11s</span>
<span class="n" style="left:193.4px;top:169.4px;">0.9%</span>
<span class="n" style="left:254.7px;top:169.4px;">0.01 m</span>
<span class="n" style="left:315.2px;top:169.4px;">0.03 g</span>
<div class="cb" style="top:166.9px"></div>
<svg class="ck" style="top:166.9px" width="15" height="15"><path d="M2.3,8.3 L6,11.3 L12.6,4.8" fill="none" stroke="#00c23f" stroke-width="2.2" stroke-linecap="round" stroke-linejoin="round"/></svg>
<div class="sw" style="left:13px;top:190.6px;background:#5a56c8"></div>
<span class="t" style="left:30.3px;top:188.6px;">Bottom surface</span>
<span class="n" style="left:138.9px;top:190.4px;">38s</span>
<span class="n" style="left:193.4px;top:190.4px;">3.1%</span>
<span class="n" style="left:254.7px;top:190.4px;">0.07 m</span>
<span class="n" style="left:315.2px;top:190.4px;">0.21 g</span>
<div class="cb" style="top:187.9px"></div>
<svg class="ck" style="top:187.9px" width="15" height="15"><path d="M2.3,8.3 L6,11.3 L12.6,4.8" fill="none" stroke="#00c23f" stroke-width="2.2" stroke-linecap="round" stroke-linejoin="round"/></svg>
<div class="sw" style="left:13px;top:211.6px;background:#4a8cc8"></div>
<span class="t" style="left:30.3px;top:209.6px;">Bridge</span>
<span class="n" style="left:138.9px;top:211.4px;">8s</span>
<span class="n" style="left:193.4px;top:211.4px;">0.7%</span>
<span class="n" style="left:254.7px;top:211.4px;">0.02 m</span>
<span class="n" style="left:315.2px;top:211.4px;">0.07 g</span>
<div class="cb" style="top:208.9px"></div>
<svg class="ck" style="top:208.9px" width="15" height="15"><path d="M2.3,8.3 L6,11.3 L12.6,4.8" fill="none" stroke="#00c23f" stroke-width="2.2" stroke-linecap="round" stroke-linejoin="round"/></svg>
<div class="sw" style="left:13px;top:232.6px;background:#ffffff"></div>
<span class="t" style="left:30.3px;top:230.6px;">Gap infill</span>
<span class="n" style="left:138.9px;top:232.4px;">2s</span>
<span class="n" style="left:193.4px;top:232.4px;">0.2%</span>
<span class="n" style="left:254.7px;top:232.4px;">0.00 m</span>
<span class="n" style="left:315.2px;top:232.4px;">0.00 g</span>
<div class="cb" style="top:229.9px"></div>
<svg class="ck" style="top:229.9px" width="15" height="15"><path d="M2.3,8.3 L6,11.3 L12.6,4.8" fill="none" stroke="#00c23f" stroke-width="2.2" stroke-linecap="round" stroke-linejoin="round"/></svg>
<div class="sw" style="left:13px;top:253.6px;background:#5852c0"></div>
<span class="t" style="left:30.3px;top:251.6px;">Travel</span>
<span class="n" style="left:138.9px;top:253.4px;">2m27s</span>
<span class="n" style="left:193.4px;top:253.4px;">11.7%</span>
<div class="cb" style="top:250.9px"></div>
<div class="sw" style="left:13px;top:274.6px;background:#c23cde"></div>
<span class="t" style="left:30.3px;top:272.6px;">Retract</span>
<div class="cb" style="top:271.9px"></div>
<div class="sw" style="left:13px;top:295.6px;background:#4890c8;background-image:radial-gradient(#70c0d0 0.8px,transparent 1px);background-size:2px 2px"></div>
<span class="t" style="left:30.3px;top:293.6px;">Unretract</span>
<div class="cb" style="top:292.9px"></div>
<div class="sw" style="left:13px;top:316.6px;background:#ffe21a"></div>
<span class="t" style="left:30.3px;top:314.6px;">Wipe</span>
<div class="cb" style="top:313.9px"></div>
<div class="sw" style="left:13px;top:337.6px;background:#e2e2e2"></div>
<span class="t" style="left:30.3px;top:335.6px;">Seams</span>
<div class="cb" style="top:334.9px"></div>
<svg class="ck" style="top:334.9px" width="15" height="15"><path d="M2.3,8.3 L6,11.3 L12.6,4.8" fill="none" stroke="#00c23f" stroke-width="2.2" stroke-linecap="round" stroke-linejoin="round"/></svg>
<span class="b" style="left:12.3px;top:367.2px;">Total Estimation</span>
<div class="hl" style="top:384.3px"></div>
<span class="t" style="left:12.3px;top:389.4px;">Total Filament:</span>
<span class="n" style="left:181.2px;top:390.6px;">1.68 m</span>
<span class="n" style="left:236.3px;top:390.6px;">5.08 g</span>
<span class="t" style="left:12.3px;top:408.5px;">Model Filament:</span>
<span class="n" style="left:181.2px;top:409.6px;">1.68 m</span>
<span class="n" style="left:236.3px;top:409.6px;">5.08 g</span>
<span class="t" style="left:12.3px;top:427.5px;">Cost:</span>
<span class="n" style="left:181.2px;top:428.7px;">0.13</span>
<span class="t" style="left:12.3px;top:446.6px;">Prepare and timelapse time:</span>
<span class="n" style="left:181.2px;top:447.8px;">9m28s + 48s</span>
<span class="t" style="left:12.3px;top:465.7px;">Model printing time:</span>
<span class="n" style="left:181.2px;top:466.8px;">10m43s</span>
<span class="t" style="left:12.3px;top:484.7px;">Total time:</span>
<span class="n" style="left:181.2px;top:485.9px;">21m0s</span>
<span class="b" style="left:12.3px;top:520.9px;color:#262626;">Filament Grouping</span>
<span class="t" style="left:323.0px;top:519.4px;color:#00ae42;letter-spacing:0.2px;">Why this grouping</span>
<div class="dl" style="left:6.5px;top:536.3px;width:446px;border-top:1px dotted #c8c8c8"></div>
<div class="nz" style="left:12.3px"><div class="nzh"></div></div>
<div class="nz" style="left:233.3px"><div class="nzh"></div></div>
<span class="t" style="left:20.0px;top:554.2px;color:#333;">Left nozzle</span>
<span class="t" style="left:241.0px;top:554.2px;color:#333;">Right nozzle</span>
<div id="fb">1</div>
<span class="t" style="left:23.2px;top:608.6px;color:#333;">PLA</span>
<span class="t" style="left:12.3px;top:651.5px;color:#333333;">Please place filaments on the printer based on grouping result.</span>
<div style="position:absolute;left:12.3px;top:677.5px;width:437.5px;height:1px;background:repeating-linear-gradient(90deg,#cfcfcf 0 6px,transparent 6px 9.2px)"></div>
<span class="t" style="left:12.3px;top:695.3px;color:#00ae42;">Regroup filament</span>
</div>
<div id="sc"><div id="th"></div></div>
</body></html>
